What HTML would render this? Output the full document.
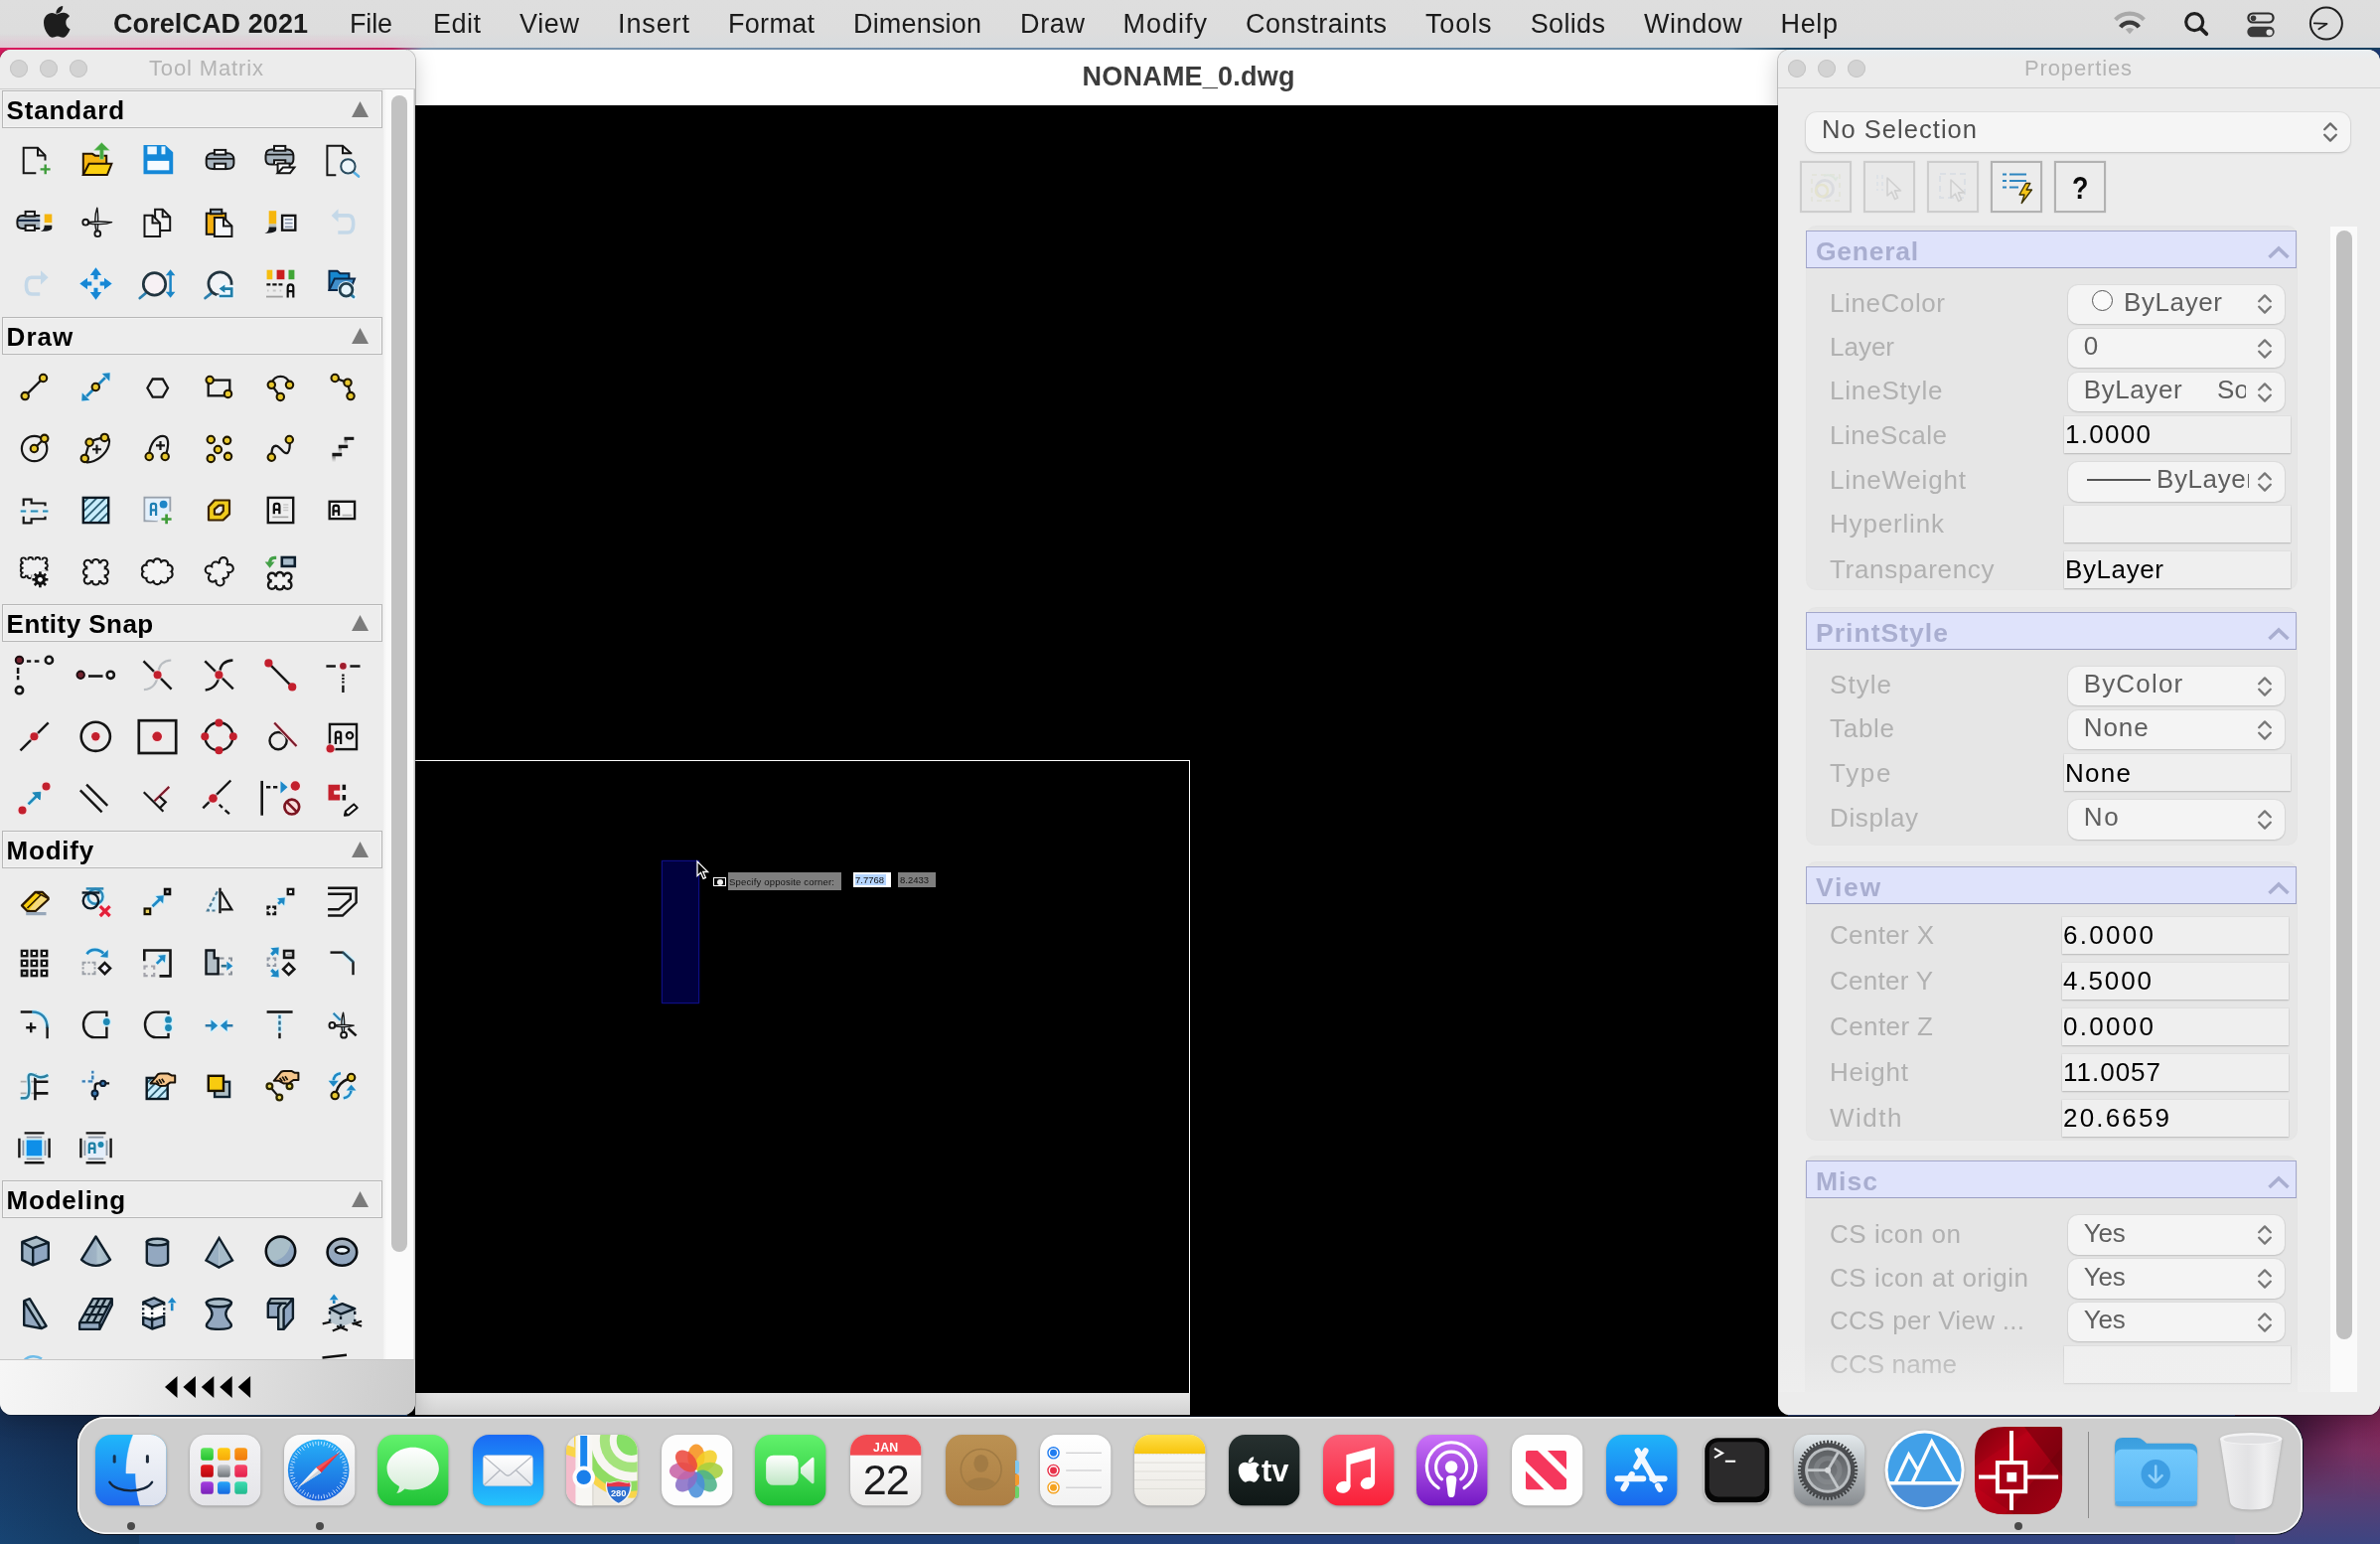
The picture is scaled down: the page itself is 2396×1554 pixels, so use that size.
<!DOCTYPE html>
<html lang="en"><head><meta charset="utf-8"><title>CorelCAD 2021</title>
<style>

html,body{margin:0;padding:0}
body{width:2396px;height:1554px;overflow:hidden;position:relative;font-family:"Liberation Sans",sans-serif;
 background:#1c3b78;}
.t{position:absolute;white-space:pre;line-height:1;}
.abs{position:absolute}
svg{position:absolute;overflow:visible}
#screen{position:absolute;left:0;top:0;width:2396px;height:1554px;overflow:hidden;will-change:transform}

</style></head>
<body>
<div id="screen">
<div class="abs" style="left:0;top:1380px;width:2396px;height:174px;background:linear-gradient(90deg,#15406c 0px,#173f70 300px,#213f7a 1200px,#2f4380 2000px,#3b4582 2396px);"></div>
<div class="abs" style="left:0;top:1400px;width:140px;height:154px;background:linear-gradient(180deg,#13233f 0px,#14284a 28px,#15335c 70px,#164270 154px);"></div>
<div class="abs" style="left:0;top:1400px;width:140px;height:154px;background:linear-gradient(90deg,rgba(30,80,130,.18),rgba(0,0,0,.18));"></div>
<div class="abs" style="left:2250px;top:1400px;width:146px;height:154px;background:linear-gradient(180deg,#5d1c45 0px,#6e2250 30px,#793062 60px,#643a6e 95px,#4f4179 125px,#3c4582 154px);"></div>
<div class="abs" style="left:2250px;top:1400px;width:146px;height:110px;background:linear-gradient(90deg,rgba(25,10,35,.55) 60px,rgba(25,10,35,0) 120px,rgba(150,40,90,.25) 146px);-webkit-mask-image:linear-gradient(180deg,#000 40px,transparent 110px)"></div>
<div class="abs" style="left:0;top:44px;width:30px;height:24px;background:#d81b60"></div>
<div class="abs" style="left:410px;top:50px;width:1390px;height:56px;background:#fff;"></div>
<span class="t" style="left:1089.5px;top:63.5px;font-size:27px;font-weight:700;color:#3c3c3c;letter-spacing:0.226px;">NONAME_0.dwg</span>
<div class="abs" style="left:410px;top:106px;width:1390px;height:1320px;background:#000;"></div>
<div class="abs" style="left:418px;top:764.800px;width:780.200px;height:1.400px;background:#fff;"></div>
<div class="abs" style="left:1196.800px;top:764.800px;width:1.400px;height:638px;background:#fff;"></div>
<div class="abs" style="left:418px;top:1402px;width:780px;height:22px;background:linear-gradient(180deg,#e5e5e5,#d2d2d2);"></div>
<div class="abs" style="left:666px;top:866px;width:36px;height:142px;background:#00003e;border:1px solid #0e0e84;box-shadow:0 0 2px #07075a;"></div>
<svg style="left:701px;top:866px" width="14" height="20" viewBox="0 0 14 20"><path d="M1 1v14.5l3.5-3.2 2.6 6 2.3-1-2.6-5.8H11.6z" fill="#000" stroke="#fff" stroke-width="1.3" stroke-linejoin="miter"/></svg>
<div class="abs" style="left:718px;top:883px;width:13px;height:9px;border:1px solid #fff;box-sizing:border-box"></div>
<div class="abs" style="left:721.5px;top:885px;width:6px;height:6px;border-radius:3px;background:#eee"></div>
<div class="abs" style="left:733px;top:878px;width:114px;height:18px;background:#7f7f7f;"></div>
<span class="t" style="left:734px;top:882.5px;font-size:9.5px;color:#151515;letter-spacing:0.177px;">Specify opposite corner:</span>
<div class="abs" style="left:859px;top:878px;width:38px;height:15px;background:#fff;"></div>
<div class="abs" style="left:861px;top:880px;width:31px;height:11px;background:#b5d5ff;"></div>
<span class="t" style="left:861px;top:881.0px;font-size:9.5px;color:#111;letter-spacing:-0.013px;">7.7768</span>
<div class="abs" style="left:904px;top:878px;width:38px;height:15px;background:#7f7f7f;"></div>
<span class="t" style="left:906px;top:881.0px;font-size:9.5px;color:#151515;letter-spacing:-0.013px;">8.2433</span>
<div class="abs" style="left:0;top:50px;width:418px;height:1374px;background:#ececec;border-radius:11px 11px 12px 12px;box-shadow:0 0 0 1px rgba(0,0,0,.2),0 3px 22px rgba(0,0,0,.2);overflow:hidden"><div class="abs" style="left:0;top:0;width:418px;height:38.5px;background:#ececec;border-bottom:1px solid #cdcdcd"></div><div class="abs" style="left:386px;top:39.5px;width:32px;height:1279px;background:linear-gradient(90deg,#f1f1f1 0,#fafafa 3px);box-shadow:inset -1.500px 0 0 #c2c2c2"></div><div class="abs" style="left:394px;top:46px;width:15.800px;height:1164.300px;background:#c2c2c2;border-radius:8px"></div><div class="abs" style="left:0;top:1318px;width:418px;height:56px;border-top:1.5px solid #c6c6c6;background:linear-gradient(100deg,#f6f6f6 0%,#ececec 30%,#d9d9d9 70%,#cbcbcb 100%)"></div></div>
<div style="position:absolute;left:9.8px;top:59.6px;width:18px;height:18px;border-radius:9px;background:#d3d3d3;box-shadow:inset 0 0 0 1px #c4c4c4;"></div>
<div style="position:absolute;left:39.6px;top:59.6px;width:18px;height:18px;border-radius:9px;background:#d3d3d3;box-shadow:inset 0 0 0 1px #c4c4c4;"></div>
<div style="position:absolute;left:70px;top:59.6px;width:18px;height:18px;border-radius:9px;background:#d3d3d3;box-shadow:inset 0 0 0 1px #c4c4c4;"></div>
<span class="t" style="left:150px;top:58.0px;font-size:22px;color:#b4b4b4;letter-spacing:0.864px;">Tool Matrix</span>
<div class="abs" style="left:0;top:89.5px;width:386px;height:1278px;overflow:hidden"><div style="position:absolute;left:2px;top:1.0px;width:383px;height:38px;box-sizing:border-box;border:1.5px solid #b7b7b7;background:#ededed;box-shadow:inset 0 0 0 1px #f3f3f3"></div><span class="t" style="left:6.6px;top:8.5px;font-size:26px;font-weight:700;color:#000;letter-spacing:0.844px;">Standard</span><svg style="left:353.500px;top:12.5px" width="17" height="16" viewBox="0 0 17 16"><path d="M8.500 0L17 16H0z" fill="#7b7b7b"/></svg><svg style="left:18.6px;top:55.8px" width="32" height="32" viewBox="0 0 32 32"><path d="M17.3 29.3H4.7V3.8H19L26.5 11.4V16.6" fill="none" stroke="#151515" stroke-width="2"/><path d="M19 3.8V11.4H26.5" fill="none" stroke="#151515" stroke-width="2"/><path d="M26.7 20.5V30.3M21.6 25.4H31.6" stroke="#3e9c3a" stroke-width="2.4"/></svg><svg style="left:80.7px;top:55.8px" width="32" height="32" viewBox="0 0 32 32"><path d="M2.8 31V9.8H12L14.800 11.700H26.2V19" fill="#f6b511" stroke="#231400" stroke-width="2" stroke-linejoin="miter"/><path d="M21.3 -1.600L29.3 6.200H23.300V15.300H19.500V6.200H13.600z" fill="#43a83e" stroke="#9fd89a" stroke-width=".6"/><path d="M8.600 19.800H31.400L26.900 31.100H2.800z" fill="#fbcf10" stroke="#231400" stroke-width="2" stroke-linejoin="miter"/></svg><svg style="left:142.7px;top:55.8px" width="32" height="32" viewBox="0 0 32 32"><path d="M1.500 0.900H23.400L31.200 8.300V30.200H1.500z" fill="#1488d8"/><rect x="5.400" y="2.400" width="9.400" height="7.900" fill="#eef8ff"/><rect x="19.500" y="2.400" width="3.900" height="7.900" fill="#e3f5ff"/><rect x="5.400" y="16.900" width="21.900" height="9.400" fill="#f6fbff"/></svg><svg style="left:204.7px;top:55.8px" width="32" height="32" viewBox="0 0 32 32"><g transform="translate(0 0)"><path d="M9 9.300C4.500 9.300 2.700 12.400 2.700 15.600V19.400C2.700 22.800 5 24.900 9 24.900H24C28 24.900 30.400 22.800 30.400 19.400V15.600C30.400 12.400 28.500 9.300 24 9.300z" fill="#a7b3bd" stroke="#151515" stroke-width="2"/><path d="M3 14.800H30" stroke="#151515" stroke-width="1.700"/><rect x="10.900" y="5.900" width="11.300" height="4.700" fill="#fbfdff" stroke="#151515" stroke-width="2"/><rect x="10.900" y="19.700" width="11.300" height="5.400" fill="#fbfdff" stroke="#151515" stroke-width="2"/></g></svg><svg style="left:266.6px;top:55.8px" width="32" height="32" viewBox="0 0 32 32"><path d="M6.500 5.600C2 5.600 0.500 8.700 0.500 11.600V15.400C0.500 18.600 2.600 20.600 6.500 20.600H22.500C26.400 20.600 28.400 18.600 28.400 15.400V11.600C28.400 8.700 26.900 5.600 22.500 5.600z" fill="#a7b3bd" stroke="#151515" stroke-width="2"/><path d="M1 10.600H28" stroke="#151515" stroke-width="1.700"/><rect x="9" y="1.900" width="11.300" height="4.800" fill="#fbfdff" stroke="#151515" stroke-width="2"/><path d="M9 20.300V16.300H20.300V19" fill="#fbfdff" stroke="#151515" stroke-width="2"/><path d="M12.600 29.200V19.500H24.600V23" fill="#fbfdff" stroke="#151515" stroke-width="2"/><path d="M17.900 23.500H29.400L25 29.200H12.600z" fill="#fbfdff" stroke="#151515" stroke-width="2"/></svg><svg style="left:328.6px;top:55.8px" width="32" height="32" viewBox="0 0 32 32"><path d="M9.300 31.300H0.400V1.700H16L24.300 9.300" fill="none" stroke="#151515" stroke-width="2"/><path d="M16 1.700V9.300H25.300" fill="none" stroke="#151515" stroke-width="2"/><circle cx="21.400" cy="22.400" r="8.800" fill="#eaf5fb" opacity=".8"/><path d="M26.700 28L32 32.600" stroke="#55aee2" stroke-width="2.600" stroke-linecap="round"/><circle cx="21.400" cy="22.400" r="7.200" fill="#edf6fb" stroke="#2a4b5e" stroke-width="2"/></svg><svg style="left:18.6px;top:117.8px" width="32" height="32" viewBox="0 0 32 32"><path d="M21.200 10.100H3.500C-0.500 10.100 -1.600 13 -1.600 15.500V18C-1.600 21 0 22.900 3.500 22.900H21.200" fill="#a7b3bd" stroke="#151515" stroke-width="2"/><path d="M-1.300 14.900H21.200" stroke="#0c1f3a" stroke-width="1.900"/><rect x="6.600" y="5.900" width="9.300" height="4.700" fill="#fbfdff" stroke="#151515" stroke-width="2"/><rect x="6.600" y="19.800" width="9.300" height="5.100" fill="#fbfdff" stroke="#151515" stroke-width="2"/><rect x="25.700" y="8.500" width="7.600" height="8.800" fill="#f5b50f"/><rect x="25.700" y="17.300" width="7.600" height="2.500" fill="#f2ecd0"/><path d="M33.300 19.800V22.500C33.300 24.600 30 25.900 21.600 25.900C24.500 25 25.700 23 25.700 19.800z" fill="#16181c"/></svg><svg style="left:80.7px;top:117.8px" width="32" height="32" viewBox="0 0 32 32"><circle cx="5.200" cy="16.700" r="2.900" fill="#f4f4f4" stroke="#151515" stroke-width="1.900"/><circle cx="17.300" cy="28.200" r="2.900" fill="#f4f4f4" stroke="#151515" stroke-width="1.900"/><path d="M16.800 2.200C14.200 9 14.500 20 15.800 25.500L17.200 25.600C17.800 18 17.800 8 16.800 2.200z" fill="#e9edef" stroke="#151515" stroke-width="1.400" stroke-linejoin="round"/><path d="M31.600 16.600C25 19.200 14 19 8 17.700L8 16.500C15 15.800 25 16 31.600 16.600z" fill="#e9edef" stroke="#151515" stroke-width="1.400" stroke-linejoin="round"/></svg><svg style="left:142.7px;top:117.8px" width="32" height="32" viewBox="0 0 32 32"><path d="M13.1 3.8H20.7L28.2 11.3V24.9H13.1z" fill="#f3f3f3" stroke="#151515" stroke-width="2" stroke-linejoin="miter"/><path d="M20.7 3.8V11.3H28.2" fill="none" stroke="#151515" stroke-width="2"/><path d="M2.5 9.8H10.500000000000002L18.1 17.4V31.1H2.5z" fill="#f3f3f3" stroke="#151515" stroke-width="2" stroke-linejoin="miter"/><path d="M10.500000000000002 9.8V17.4H18.1" fill="none" stroke="#151515" stroke-width="2"/></svg><svg style="left:204.7px;top:117.8px" width="32" height="32" viewBox="0 0 32 32"><rect x="2.800" y="7.700" width="19.400" height="21.100" fill="#f5b112" stroke="#151515" stroke-width="2"/><rect x="7" y="3.800" width="11.300" height="4.500" fill="#9bb0c4" stroke="#151515" stroke-width="2"/><path d="M10.9 12H20.0L28.4 20.4V31.1H10.9z" fill="#f5f7fc" stroke="#151515" stroke-width="2" stroke-linejoin="miter"/><path d="M20.0 12V20.4H28.4" fill="none" stroke="#151515" stroke-width="2"/></svg><svg style="left:266.6px;top:117.8px" width="32" height="32" viewBox="0 0 32 32"><rect x="3.700" y="5.200" width="7.500" height="13.300" fill="#f6b60d"/><rect x="3.700" y="18.500" width="7.500" height="3.100" fill="#b9c0bd"/><path d="M11.200 21.600V24C11.200 26.500 7 27.800 -0.600 27.800C3 26.600 3.700 24.500 3.700 21.600z" fill="#15181c"/><rect x="17.100" y="9.900" width="13.200" height="14.800" fill="#fafcff" stroke="#151515" stroke-width="2.400"/><path d="M19.800 13.800H27.600M19.800 17.600H27.600M19.800 21.400H27.600" stroke="#8b96aa" stroke-width="1.700"/></svg><svg style="left:328.6px;top:117.8px" width="32" height="32" viewBox="0 0 32 32"><path d="M10 9.900H22C26 9.900 26.700 14 26.700 18.400C26.700 23 25.500 27 21 27H11.300" fill="none" stroke="#c4d8e8" stroke-width="3.600"/><path d="M4.600 9.900L11.500 3.200V16.600z" fill="#c4d8e8"/></svg><svg style="left:18.6px;top:179.8px" width="32" height="32" viewBox="0 0 32 32"><path d="M23 10.300H12.500C8 10.300 7.400 14 7.400 18.500C7.400 23 8.500 27 13 27H21.200" fill="none" stroke="#c4d8e8" stroke-width="3.600"/><path d="M29.600 10.300L22 3.200V17.400z" fill="#c4d8e8"/></svg><svg style="left:80.7px;top:179.8px" width="32" height="32" viewBox="0 0 32 32"><g fill="#1787d4" stroke="#d9f0ff" stroke-width="1.200" paint-order="stroke" stroke-linejoin="round"><path d="M15.500 0.300L21.200 8H17.500V12.300H13.500V8H9.800z"/><path d="M15.500 32.700L21.200 25H17.500V20.700H13.500V25H9.800z"/><path d="M-0.700 16.500L7 10.800V14.500H11.300V18.500H7V22.200z"/><path d="M31.700 16.500L24 10.800V14.500H19.700V18.500H24V22.200z"/></g></svg><svg style="left:142.7px;top:179.8px" width="32" height="32" viewBox="0 0 32 32"><path d="M3.800 26L-2.200 31" stroke="#2b7fae" stroke-width="2.800" stroke-linecap="round"/><circle cx="12.500" cy="16.900" r="11.200" fill="#f7f1f4" stroke="#21343f" stroke-width="2.700"/><path d="M28.600 6V27" stroke="#1b86c7" stroke-width="2.500"/><path d="M28.600 2.200L33.400 8.300H23.800zM28.600 30.800L33.400 24.700H23.800z" fill="#1b86c7"/></svg><svg style="left:204.7px;top:179.8px" width="32" height="32" viewBox="0 0 32 32"><path d="M8 25.800L1.600 31" stroke="#2b7fae" stroke-width="2.800" stroke-linecap="round"/><circle cx="16.500" cy="16.500" r="11.600" fill="#f1f3f6" stroke="#21343f" stroke-width="2.700"/><path d="M16 21.600L21.200 17.600V20.300H28.200V29H15.700V27.700" fill="#eef8ff" stroke="#eef8ff" stroke-width="5" stroke-linejoin="round"/><path d="M21 21.600H28.200V29H15.700" fill="none" stroke="#1f7ea8" stroke-width="2.700"/><path d="M15.600 21.600L21.400 17.500V25.700z" fill="#1f7ea8"/></svg><svg style="left:266.6px;top:179.8px" width="32" height="32" viewBox="0 0 32 32"><rect x="1.600" y="2.700" width="5.700" height="9.500" fill="#f6bd0f"/><rect x="11.600" y="2.700" width="7.800" height="9.500" fill="#cb1e1e"/><rect x="23.500" y="2.700" width="5.900" height="9.500" fill="#40a636"/><path d="M1.400 17.400H5.300M7.300 17.400H11.600M13.500 17.400H17.400" stroke="#111" stroke-width="2.200"/><path d="M2 23.500H3.600M7.700 23.500H10.700M14.600 23.500H16.200" stroke="#c6c6c6" stroke-width="1.800"/><path d="M1 29.600H17.800" stroke="#a2a2a2" stroke-width="1.800"/><path d="M22.700 30.400V20.300C22.700 18.300 23.700 17.300 25.500 17.300C27.300 17.300 28.300 18.300 28.300 20.300V30.400M22.700 24.200H28.300" fill="none" stroke="#0d0d0d" stroke-width="2.200"/></svg><svg style="left:328.6px;top:179.8px" width="32" height="32" viewBox="0 0 32 32"><path d="M2.500 22.900V3.800H10.600L13.400 6.200H22.400V11" fill="#1787cf" stroke="#0b2747" stroke-width="2" stroke-linejoin="miter"/><path d="M7.800 11.600H28L23.500 22.900H2.500z" fill="#418fca" stroke="#0b2747" stroke-width="2" stroke-linejoin="miter"/><circle cx="19.500" cy="22.700" r="8.600" fill="#e9f6fd"/><path d="M24 27.400L27.200 30" stroke="#e9f6fd" stroke-width="5.500" stroke-linecap="round"/><path d="M24 27.400L27 29.900" stroke="#2b7fa8" stroke-width="2.800" stroke-linecap="round"/><circle cx="19.500" cy="22.700" r="6.400" fill="#e6f4fb" stroke="#22404f" stroke-width="2.700"/></svg><div style="position:absolute;left:2px;top:229.0px;width:383px;height:38px;box-sizing:border-box;border:1.5px solid #b7b7b7;background:#ededed;box-shadow:inset 0 0 0 1px #f3f3f3"></div><span class="t" style="left:6.6px;top:236.5px;font-size:26px;font-weight:700;color:#000;letter-spacing:1.007px;">Draw</span><svg style="left:353.500px;top:240.5px" width="17" height="16" viewBox="0 0 17 16"><path d="M8.500 0L17 16H0z" fill="#7b7b7b"/></svg><svg style="left:18.6px;top:283.8px" width="32" height="32" viewBox="0 0 32 32"><path d="M6.200 25.600L24.500 7.500" stroke="#151515" stroke-width="2.400"/><circle cx="24.5" cy="7.5" r="3.7" fill="#e9c92f" stroke="#1e1600" stroke-width="2.1"/><circle cx="6.2" cy="25.6" r="3.7" fill="#e9c92f" stroke="#1e1600" stroke-width="2.1"/></svg><svg style="left:80.7px;top:283.8px" width="32" height="32" viewBox="0 0 32 32"><g stroke="#cdeeff" stroke-width="1.200" paint-order="stroke" stroke-linejoin="round"><path d="M26.500 5.500L4.500 27.500" stroke="#1e86c0" stroke-width="2.700" paint-order="normal"/><path d="M29.700 2.200L21.800 3.100L29.200 10.500z" fill="#1e86c0"/><path d="M1.300 30.400L9.200 29.800L1.800 22.400z" fill="#1e86c0"/></g><circle cx="15.3" cy="16.5" r="3.7" fill="#e9c92f" stroke="#1e1600" stroke-width="2.1"/></svg><svg style="left:142.7px;top:283.8px" width="32" height="32" viewBox="0 0 32 32"><path d="M5.400 17.500L10.700 8.500H20.800L26 17.500L20.800 26.600H10.700z" fill="none" stroke="#151515" stroke-width="2.300" stroke-linejoin="miter"/></svg><svg style="left:204.7px;top:283.8px" width="32" height="32" viewBox="0 0 32 32"><rect x="4.700" y="9.600" width="21.600" height="15.700" fill="none" stroke="#151515" stroke-width="2.300"/><circle cx="6.2" cy="9.5" r="3.7" fill="#e9c92f" stroke="#1e1600" stroke-width="2.1"/><circle cx="24.5" cy="23.4" r="3.7" fill="#e9c92f" stroke="#1e1600" stroke-width="2.1"/></svg><svg style="left:266.6px;top:283.8px" width="32" height="32" viewBox="0 0 32 32"><path d="M6.300 14.300L15.300 26.400" stroke="#151515" stroke-width="2.300"/><path d="M6.600 12.500A9.200 9.200 0 0 1 24.300 12.500" fill="none" stroke="#151515" stroke-width="2.300"/><circle cx="6.3" cy="14.3" r="3.7" fill="#e9c92f" stroke="#1e1600" stroke-width="2.1"/><circle cx="24.5" cy="14.3" r="3.7" fill="#e9c92f" stroke="#1e1600" stroke-width="2.1"/><circle cx="15.3" cy="26.4" r="3.7" fill="#e9c92f" stroke="#1e1600" stroke-width="2.1"/></svg><svg style="left:328.6px;top:283.8px" width="32" height="32" viewBox="0 0 32 32"><path d="M8.200 7.500L21 12.200L24 25.600" fill="none" stroke="#151515" stroke-width="2.300"/><circle cx="8.2" cy="7.5" r="3.7" fill="#e9c92f" stroke="#1e1600" stroke-width="2.1"/><circle cx="21" cy="12.2" r="3.7" fill="#e9c92f" stroke="#1e1600" stroke-width="2.1"/><circle cx="24" cy="25.6" r="3.7" fill="#e9c92f" stroke="#1e1600" stroke-width="2.1"/></svg><svg style="left:18.6px;top:345.8px" width="32" height="32" viewBox="0 0 32 32"><circle cx="15.600" cy="16.500" r="12.700" fill="none" stroke="#151515" stroke-width="2.200"/><path d="M15.400 16.500L25.700 6.300" stroke="#151515" stroke-width="2.200"/><circle cx="15.4" cy="16.5" r="3.7" fill="#e9c92f" stroke="#1e1600" stroke-width="2.1"/><circle cx="25.75" cy="6.3" r="3.7" fill="#e9c92f" stroke="#1e1600" stroke-width="2.1"/></svg><svg style="left:80.7px;top:345.8px" width="32" height="32" viewBox="0 0 32 32"><path d="M4.300 26.400L9.100 10.300Q15.500 6.500 24.300 5.400C29 4.500 30 8 28.500 13C26 22 16 30.500 6.500 30.300C4.500 30.200 4 28.500 4.300 26.400z" fill="none" stroke="#151515" stroke-width="2.200"/><path d="M16.500 12.800V21.800M12 17.300H21" stroke="#151515" stroke-width="2.100"/><circle cx="9.1" cy="10.25" r="3.7" fill="#e9c92f" stroke="#1e1600" stroke-width="2.1"/><circle cx="24.3" cy="5.4" r="3.7" fill="#e9c92f" stroke="#1e1600" stroke-width="2.1"/><circle cx="4.3" cy="26.4" r="3.7" fill="#e9c92f" stroke="#1e1600" stroke-width="2.1"/></svg><svg style="left:142.7px;top:345.8px" width="32" height="32" viewBox="0 0 32 32"><path d="M7.200 22C8 12 14 3.800 21 3.800C27 3.800 27.200 12 24.300 22" fill="none" stroke="#151515" stroke-width="2.200"/><path d="M18.500 8.900V17.900M14 13.400H23" stroke="#151515" stroke-width="2.200"/><circle cx="7.2" cy="24.5" r="3.7" fill="#e9c92f" stroke="#1e1600" stroke-width="2.1"/><circle cx="23.2" cy="24.5" r="3.7" fill="#e9c92f" stroke="#1e1600" stroke-width="2.1"/></svg><svg style="left:204.7px;top:345.8px" width="32" height="32" viewBox="0 0 32 32"><circle cx="7.3" cy="7.5" r="3.7" fill="#e9c92f" stroke="#1e1600" stroke-width="2.1"/><circle cx="23.6" cy="8.3" r="3.7" fill="#e9c92f" stroke="#1e1600" stroke-width="2.1"/><circle cx="14.4" cy="17.5" r="3.7" fill="#e9c92f" stroke="#1e1600" stroke-width="2.1"/><circle cx="7.3" cy="26.4" r="3.7" fill="#e9c92f" stroke="#1e1600" stroke-width="2.1"/><circle cx="24.5" cy="24.3" r="3.7" fill="#e9c92f" stroke="#1e1600" stroke-width="2.1"/></svg><svg style="left:266.6px;top:345.8px" width="32" height="32" viewBox="0 0 32 32"><path d="M6.500 22.500C6.500 15 8.500 13.500 11.500 13.800C15 14.200 18 21.500 21.300 21.200C24.200 21 24.800 15 24.800 11" fill="none" stroke="#151515" stroke-width="2.300"/><circle cx="24.3" cy="7.5" r="3.7" fill="#e9c92f" stroke="#1e1600" stroke-width="2.1"/><circle cx="6.3" cy="25.25" r="3.7" fill="#e9c92f" stroke="#1e1600" stroke-width="2.1"/></svg><svg style="left:328.6px;top:345.8px" width="32" height="32" viewBox="0 0 32 32"><defs><linearGradient id="skg" x1="0" y1="0" x2="0" y2="1"><stop offset="0" stop-color="#777"/><stop offset="1" stop-color="#bbb" stop-opacity=".2"/></linearGradient></defs><rect x="17.500" y="7.900" width="3.200" height="4.900" fill="url(#skg)"/><rect x="11.700" y="16.100" width="3.200" height="4.700" fill="url(#skg)"/><rect x="5.400" y="24.300" width="3.400" height="5.500" fill="url(#skg)"/><rect x="17.500" y="4.800" width="9.800" height="3.100" fill="#171717"/><rect x="11.700" y="12.750" width="9.500" height="3.350" fill="#171717"/><rect x="5.400" y="20.800" width="9.800" height="3.500" fill="#171717"/></svg><svg style="left:18.6px;top:407.8px" width="32" height="32" viewBox="0 0 32 32"><path d="M4.700 12.200V5.600H12.600V9.500H26.500V12.200M4.700 22.750V29.400H12.600V25.250H26.500V22.750" fill="none" stroke="#151515" stroke-width="2.200"/><path d="M1.700 17.500H7.200M11.800 17.500H19.300M24 17.500H29.400" stroke="#d4f0fb" stroke-width="4"/><path d="M1.700 17.500H7.200M11.800 17.500H19.300M24 17.500H29.400" stroke="#2a8ab4" stroke-width="2.200"/></svg><svg style="left:80.7px;top:407.8px" width="32" height="32" viewBox="0 0 32 32"><defs><clipPath id="hcl"><rect x="2.800" y="3.900" width="25.400" height="25.200"/></clipPath></defs><rect x="2.800" y="3.900" width="25.400" height="25.200" fill="#c8edfc"/><g clip-path="url(#hcl)" stroke="#2c5e73" stroke-width="1.800"><path d="M-4 16L16 -4M-4 24.700L24.700 -4M-4 33.400L33.400 -4M4.700 33.400L36 2.100M13.400 33.400L36 10.800M22.100 33.400L36 19.500"/></g><rect x="2.800" y="3.900" width="25.400" height="25.200" fill="none" stroke="#0b1822" stroke-width="2.400"/></svg><svg style="left:142.7px;top:407.8px" width="32" height="32" viewBox="0 0 32 32"><path d="M15.600 27.200H2.500V3.800H28.250V17.700" fill="#e4f0fb" stroke="#98a1ac" stroke-width="2"/><path d="M15.600 27.200V17.700H27.250V4.800H3.500V26.200z" fill="#e4f0fb"/><path d="M8.9 22.1V12.100000000000001Q8.9 9.9 11.100000000000001 9.9H11.899999999999999Q14.1 9.9 14.1 12.100000000000001V22.1M8.9 16.3H14.1" fill="none" stroke="#1d7fb4" stroke-width="2.2"/><circle cx="21.600" cy="10.600" r="3.900" fill="#1e86c8"/><path d="M24.600 20.600V30.300M19.500 25.500H29.600" stroke="#3f9c3a" stroke-width="2.700"/></svg><svg style="left:204.7px;top:407.8px" width="32" height="32" viewBox="0 0 32 32"><path d="M11 6.500H26V20.400L19.600 26.500H5V13z" fill="#f0cb1c" stroke="#3a2200" stroke-width="2.200" stroke-linejoin="round"/><path d="M15.400 11.600H19.800V17.300L16.800 20.600H10.900V15.600z" fill="#ebebf0" stroke="#3a2200" stroke-width="2.200" stroke-linejoin="round"/></svg><svg style="left:266.6px;top:407.8px" width="32" height="32" viewBox="0 0 32 32"><rect x="2.800" y="3.900" width="25.400" height="25.200" fill="#efefef" stroke="#151515" stroke-width="2.400"/><path d="M8.85 20.25V12.150000000000002Q8.85 9.950000000000001 11.05 9.950000000000001H12.149999999999999Q14.35 9.950000000000001 14.35 12.150000000000002V20.25M8.85 15.8H14.35" fill="none" stroke="#0d0d0d" stroke-width="2.3"/><path d="M18.200 11H23.300M18.200 13.800H23.300M18.200 16.500H23.300" stroke="#c9c9c9" stroke-width="1.400"/><path d="M7.300 23.400H23.300" stroke="#a6a6a6" stroke-width="1.600"/></svg><svg style="left:328.6px;top:407.8px" width="32" height="32" viewBox="0 0 32 32"><rect x="2.700" y="7.800" width="25.350" height="17.300" fill="#f2f2f2" stroke="#151515" stroke-width="2.400"/><path d="M6.550000000000001 22.1V13.95Q6.550000000000001 11.75 8.75 11.75H9.849999999999998Q12.049999999999999 11.75 12.049999999999999 13.95V22.1M6.550000000000001 17.3H12.049999999999999" fill="none" stroke="#0d0d0d" stroke-width="2.3"/><path d="M15.600 21.600H25.300" stroke="#b5b5b5" stroke-width="1.800"/></svg><svg style="left:18.6px;top:469.8px" width="32" height="32" viewBox="0 0 32 32"><defs><clipPath id="ccs"><path d="M-2 -2H34V15.500H22L11.500 26H-2z"/></clipPath></defs><g clip-path="url(#ccs)"><g fill="#151515"><circle cx="4.6" cy="4.8" r="3.4"/><circle cx="11.7" cy="4.4" r="3.4"/><circle cx="18.8" cy="4.4" r="3.4"/><circle cx="25.9" cy="4.8" r="3.4"/><circle cx="4.3" cy="10.2" r="3.4"/><circle cx="4.3" cy="15" r="3.4"/><circle cx="4.6" cy="19.8" r="3.4"/><circle cx="26.3" cy="10.3" r="3.4"/><circle cx="26.1" cy="15.5" r="3.4"/><circle cx="11" cy="20.5" r="3.4"/><circle cx="17" cy="20.5" r="3.4"/></g><path d="M4.600 4.800H25.900V19.800H4.600z" fill="#efeff0"/><g fill="#f7f7f7"><circle cx="4.6" cy="4.8" r="1.5"/><circle cx="11.7" cy="4.4" r="1.5"/><circle cx="18.8" cy="4.4" r="1.5"/><circle cx="25.9" cy="4.8" r="1.5"/><circle cx="4.3" cy="10.2" r="1.5"/><circle cx="4.3" cy="15" r="1.5"/><circle cx="4.6" cy="19.8" r="1.5"/><circle cx="26.3" cy="10.3" r="1.5"/><circle cx="26.1" cy="15.5" r="1.5"/><circle cx="11" cy="20.5" r="1.5"/><circle cx="17" cy="20.5" r="1.5"/></g></g><circle cx="21.400" cy="24.300" r="9.300" fill="#f2f2f2" opacity=".9"/><rect x="20.100" y="16.300" width="2.600" height="16" transform="rotate(0 21.400 24.300)" fill="#111"/><rect x="20.100" y="16.300" width="2.600" height="16" transform="rotate(45 21.400 24.300)" fill="#111"/><rect x="20.100" y="16.300" width="2.600" height="16" transform="rotate(90 21.400 24.300)" fill="#111"/><rect x="20.100" y="16.300" width="2.600" height="16" transform="rotate(135 21.400 24.300)" fill="#111"/><circle cx="21.400" cy="24.300" r="5.700" fill="#111"/><circle cx="21.400" cy="24.300" r="2.400" fill="#fff"/></svg><svg style="left:80.7px;top:469.8px" width="32" height="32" viewBox="0 0 32 32"><g fill="#151515"><circle cx="7.3" cy="8.3" r="4.6"/><circle cx="15.5" cy="7.5" r="4.6"/><circle cx="23.7" cy="8.3" r="4.6"/><circle cx="6.5" cy="16.7" r="4.6"/><circle cx="24.5" cy="16.7" r="4.6"/><circle cx="7.3" cy="25.1" r="4.6"/><circle cx="15.5" cy="25.9" r="4.6"/><circle cx="23.7" cy="25.1" r="4.6"/></g><path d="M7.300 8.300H23.700V25.100H7.300z" fill="#eeeeef"/><g fill="#f3f3f3"><circle cx="7.3" cy="8.3" r="2.5"/><circle cx="15.5" cy="7.5" r="2.5"/><circle cx="23.7" cy="8.3" r="2.5"/><circle cx="6.5" cy="16.7" r="2.5"/><circle cx="24.5" cy="16.7" r="2.5"/><circle cx="7.3" cy="25.1" r="2.5"/><circle cx="15.5" cy="25.9" r="2.5"/><circle cx="23.7" cy="25.1" r="2.5"/></g></svg><svg style="left:142.7px;top:469.8px" width="32" height="32" viewBox="0 0 32 32"><g fill="#151515"><circle cx="15.3" cy="7.3" r="5"/><circle cx="22.35" cy="9.02" r="5"/><circle cx="26.71" cy="13.52" r="5"/><circle cx="26.71" cy="19.08" r="5"/><circle cx="22.35" cy="23.58" r="5"/><circle cx="15.3" cy="25.3" r="5"/><circle cx="8.25" cy="23.58" r="5"/><circle cx="3.89" cy="19.08" r="5"/><circle cx="3.89" cy="13.52" r="5"/><circle cx="8.25" cy="9.02" r="5"/></g><path d="M3.300 16.300a12 9 0 1 0 24 0a12 9 0 1 0 -24 0z" fill="#f3f3f3"/><g fill="#f3f3f3"><circle cx="15.3" cy="7.3" r="2.8"/><circle cx="22.35" cy="9.02" r="2.8"/><circle cx="26.71" cy="13.52" r="2.8"/><circle cx="26.71" cy="19.08" r="2.8"/><circle cx="22.35" cy="23.58" r="2.8"/><circle cx="15.3" cy="25.3" r="2.8"/><circle cx="8.25" cy="23.58" r="2.8"/><circle cx="3.89" cy="19.08" r="2.8"/><circle cx="3.89" cy="13.52" r="2.8"/><circle cx="8.25" cy="9.02" r="2.8"/></g></svg><svg style="left:204.7px;top:469.8px" width="32" height="32" viewBox="0 0 32 32"><g fill="#151515"><circle cx="20" cy="6.2" r="5.1"/><circle cx="25.7" cy="13.2" r="5.1"/><circle cx="5.8" cy="14.5" r="5.1"/><circle cx="12.2" cy="10.5" r="5.1"/><circle cx="16.5" cy="26.4" r="5.1"/><circle cx="9" cy="22.6" r="5.1"/><circle cx="21" cy="19" r="5.1"/></g><path d="M20 6.200L25.700 13.200L21 19L16.500 26.400L9 22.600L5.800 14.500L12.200 10.500z" fill="#f1f1f1"/><g fill="#f1f1f1"><circle cx="20" cy="6.2" r="3"/><circle cx="25.7" cy="13.2" r="3"/><circle cx="5.8" cy="14.5" r="3"/><circle cx="12.2" cy="10.5" r="3"/><circle cx="16.5" cy="26.4" r="3"/><circle cx="9" cy="22.6" r="3"/><circle cx="21" cy="19" r="3"/></g></svg><svg style="left:266.6px;top:469.8px" width="32" height="32" viewBox="0 0 32 32"><path d="M11.200 2.300H9.500C6 2.300 4.600 4.500 4.600 8" fill="none" stroke="#43a047" stroke-width="3.200"/><path d="M4.600 12.800L-0.300 6.600H9.500z" fill="#43a047"/><rect x="16.800" y="2" width="13" height="8.900" fill="#a8bccb" stroke="#0b1d2b" stroke-width="2.600"/><g fill="#151515"><circle cx="6.8" cy="21.6" r="5"/><circle cx="14.7" cy="20.8" r="5"/><circle cx="22.6" cy="21.6" r="5"/><circle cx="6.8" cy="29.9" r="5"/><circle cx="14.7" cy="30.6" r="5"/><circle cx="22.6" cy="29.9" r="5"/></g><path d="M6.800 21.600H22.600V29.900H6.800z" fill="#f1f1f1"/><g fill="#f1f1f1"><circle cx="6.8" cy="21.6" r="2.6"/><circle cx="14.7" cy="20.8" r="2.6"/><circle cx="22.6" cy="21.6" r="2.6"/><circle cx="6.8" cy="29.9" r="2.6"/><circle cx="14.7" cy="30.6" r="2.6"/><circle cx="22.6" cy="29.9" r="2.6"/></g></svg><div style="position:absolute;left:2px;top:518.0px;width:383px;height:38px;box-sizing:border-box;border:1.5px solid #b7b7b7;background:#ededed;box-shadow:inset 0 0 0 1px #f3f3f3"></div><span class="t" style="left:6.6px;top:525.5px;font-size:26px;font-weight:700;color:#000;letter-spacing:0.458px;">Entity Snap</span><svg style="left:353.500px;top:529.5px" width="17" height="16" viewBox="0 0 17 16"><path d="M8.500 0L17 16H0z" fill="#7b7b7b"/></svg><svg style="left:18.6px;top:573.8px" width="32" height="32" viewBox="0 0 32 32"><path d="M7.900 2.400H12.200M15.750 2.400H20.400M-0.900 9.100V14.900M-0.900 16.900V21.200" stroke="#151515" stroke-width="2.500"/><circle cx="0.5" cy="1.4" r="3.700" fill="#74242f" stroke="#1c0c10" stroke-width="2"/><circle cx="30.4" cy="1.4" r="3.600" fill="#f6f6f6" stroke="#151515" stroke-width="2.600"/><circle cx="0.5" cy="31.7" r="3.600" fill="#f6f6f6" stroke="#151515" stroke-width="2.600"/></svg><svg style="left:80.7px;top:573.8px" width="32" height="32" viewBox="0 0 32 32"><path d="M8 17.500H22.500" stroke="#151515" stroke-width="2.600"/><circle cx="0.2" cy="16.3" r="3.700" fill="#74242f" stroke="#1c0c10" stroke-width="2"/><circle cx="30.3" cy="16.3" r="3.600" fill="#f6f6f6" stroke="#151515" stroke-width="2.600"/></svg><svg style="left:142.7px;top:573.8px" width="32" height="32" viewBox="0 0 32 32"><path d="M29.250 1.500C20 2 17 7 16.200 14C15.500 24 11 30.500 1.900 31.100" fill="none" stroke="#b9bdc1" stroke-width="2.200"/><path d="M1.500 2.400L29.600 30.600" stroke="#151515" stroke-width="2.400"/><circle cx="15.6" cy="16.3" r="5.3" fill="#fbe3e6" opacity=".7"/><circle cx="15.6" cy="16.3" r="4.0" fill="#c31f2d"/></svg><svg style="left:204.7px;top:573.8px" width="32" height="32" viewBox="0 0 32 32"><path d="M29.400 1.500C20.500 2 17 6.500 16.300 13C15.500 24 11 30.500 1.700 31.500" fill="none" stroke="#151515" stroke-width="2.400"/><path d="M1.300 2.400L29.800 30.300" stroke="#151515" stroke-width="2.400"/><circle cx="15.4" cy="16.3" r="5.3" fill="#fbe3e6" opacity=".7"/><circle cx="15.4" cy="16.3" r="4.0" fill="#c31f2d"/></svg><svg style="left:266.6px;top:573.8px" width="32" height="32" viewBox="0 0 32 32"><path d="M3.400 4.400L27.200 28.400" stroke="#151515" stroke-width="2.400"/><circle cx="3.4" cy="4.4" r="4.1" fill="#c31f2d"/><circle cx="27.2" cy="28.4" r="4.1" fill="#c31f2d"/></svg><svg style="left:328.6px;top:573.8px" width="32" height="32" viewBox="0 0 32 32"><path d="M-0.600 7.500H8.900M23.400 7.500H33.500" stroke="#151515" stroke-width="2.400"/><path d="M16.400 15.500V17.700M16.400 19V21M16.400 22.500V24.500M16.400 26.700V34" stroke="#151515" stroke-width="2.400"/><circle cx="16.4" cy="7.4" r="4.6" fill="#fbe3e6" opacity=".7"/><circle cx="16.4" cy="7.4" r="3.3" fill="#a01c2c"/></svg><svg style="left:18.6px;top:635.8px" width="32" height="32" viewBox="0 0 32 32"><path d="M1.500 30.300L29.700 2.400" stroke="#151515" stroke-width="2.400"/><circle cx="15.4" cy="16.3" r="5.3" fill="#fbe3e6" opacity=".7"/><circle cx="15.4" cy="16.3" r="4.0" fill="#c31f2d"/></svg><svg style="left:80.7px;top:635.8px" width="32" height="32" viewBox="0 0 32 32"><circle cx="15.300" cy="16.300" r="14.600" fill="none" stroke="#151515" stroke-width="2.600"/><circle cx="15.3" cy="16.3" r="5.5" fill="#fbe3e6" opacity=".7"/><circle cx="15.3" cy="16.3" r="4.2" fill="#c31f2d"/></svg><svg style="left:142.7px;top:635.8px" width="32" height="32" viewBox="0 0 32 32"><rect x="-3.200" y="0.200" width="37.400" height="32.800" fill="none" stroke="#151515" stroke-width="2.700"/><circle cx="15.2" cy="16.3" r="6.1" fill="#fbe3e6" opacity=".7"/><circle cx="15.2" cy="16.3" r="4.8" fill="#c31f2d"/></svg><svg style="left:204.7px;top:635.8px" width="32" height="32" viewBox="0 0 32 32"><circle cx="15.400" cy="16.300" r="14.100" fill="none" stroke="#151515" stroke-width="2.400"/><circle cx="1.3" cy="16.3" r="4.0" fill="#c31f2d"/><circle cx="29.8" cy="16.3" r="4.0" fill="#c31f2d"/><circle cx="15.4" cy="2.4" r="4.0" fill="#c31f2d"/><circle cx="15.4" cy="30.3" r="4.0" fill="#c31f2d"/></svg><svg style="left:266.6px;top:635.8px" width="32" height="32" viewBox="0 0 32 32"><circle cx="13.100" cy="20.600" r="8.600" fill="none" stroke="#151515" stroke-width="2.400"/><path d="M9.200 2.400L31.500 25.900" stroke="#fbdfe2" stroke-width="4"/><path d="M9.200 2.400L31.500 25.900" stroke="#7a1a2a" stroke-width="2.200"/></svg><svg style="left:328.6px;top:635.8px" width="32" height="32" viewBox="0 0 32 32"><rect x="2.950" y="3.900" width="27.050" height="25.200" fill="none" stroke="#151515" stroke-width="2.400"/><path d="M8.900 23.900V13.800Q8.900 11.700 11 11.700H12Q14.100 11.700 14.100 13.800V23.900M8.900 17.700H14.100" fill="none" stroke="#0d0d0d" stroke-width="2.300"/><circle cx="23" cy="15.300" r="3.200" fill="none" stroke="#0d0d0d" stroke-width="2.200"/><circle cx="3.5" cy="28.4" r="5.3" fill="#fbe3e6" opacity=".7"/><circle cx="3.5" cy="28.4" r="4.0" fill="#c31f2d"/></svg><svg style="left:18.6px;top:697.8px" width="32" height="32" viewBox="0 0 32 32"><path d="M9.500 22.400L19 13" stroke="#cdeefa" stroke-width="4.500"/><path d="M9.500 22.400L19 13" stroke="#1e88b8" stroke-width="2.700"/><path d="M21.800 10.250L13.800 11L21.100 18z" fill="#1e88b8" stroke="#1e88b8" stroke-width="1" stroke-linejoin="round"/><circle cx="27.5" cy="4.4" r="5.3" fill="#fbe3e6" opacity=".7"/><circle cx="27.5" cy="4.4" r="4.0" fill="#c31f2d"/><circle cx="3.5" cy="28.4" r="5.3" fill="#fbe3e6" opacity=".7"/><circle cx="3.5" cy="28.4" r="4.0" fill="#c31f2d"/></svg><svg style="left:80.7px;top:697.8px" width="32" height="32" viewBox="0 0 32 32"><path d="M-0.200 8.300L21.600 30.300M6.100 2.700L27.200 23.900" stroke="#151515" stroke-width="2.400"/></svg><svg style="left:142.7px;top:697.8px" width="32" height="32" viewBox="0 0 32 32"><path d="M12.500 19.200L27.300 4.900" stroke="#fbdfe2" stroke-width="4"/><path d="M12.500 19.200L27.300 4.900" stroke="#7a1a2a" stroke-width="2.200"/><path d="M1.750 10.250L21.400 29.800M17.500 14.500L23.800 20.400L18.300 25.900" fill="none" stroke="#151515" stroke-width="2.200"/></svg><svg style="left:204.7px;top:697.8px" width="32" height="32" viewBox="0 0 32 32"><path d="M-0.700 26.300L27.300 -1.500M15.750 22.750L18.900 25.900M21.600 28.400L25.900 32.100" stroke="#151515" stroke-width="2.400"/><circle cx="9.5" cy="16.5" r="5.6" fill="#fbe3e6" opacity=".7"/><circle cx="9.5" cy="16.5" r="4.3" fill="#c31f2d"/></svg><svg style="left:266.6px;top:697.8px" width="32" height="32" viewBox="0 0 32 32"><path d="M-3.300 -1.100V33.700" stroke="#151515" stroke-width="2.600"/><path d="M1 5.200H5.300M8 5.200H12.300" stroke="#151515" stroke-width="2.400"/><path d="M15.500 -0.700V11.400L22.500 5.200z" fill="#1e88c8" stroke="#d5f0ff" stroke-width="1" paint-order="stroke"/><circle cx="30.3" cy="4" r="6.0" fill="#fbe3e6" opacity=".7"/><circle cx="30.3" cy="4" r="4.7" fill="#c31f2d"/><circle cx="26.800" cy="25.100" r="9.200" fill="#fde8ea" opacity=".8"/><circle cx="26.800" cy="25.100" r="7.400" fill="#f8dcdc" stroke="#7a1420" stroke-width="2.700"/><path d="M21.500 19.900L32 30.400" stroke="#7a1420" stroke-width="2.700"/></svg><svg style="left:328.6px;top:697.8px" width="32" height="32" viewBox="0 0 32 32"><path d="M1.500 2.700H13.200V8.800H7.400V12.400H13.200V18.500H1.500z" fill="#c4202c"/><rect x="15.600" y="2.700" width="3.500" height="5.600" fill="#131313"/><rect x="15.600" y="13" width="3.500" height="5.500" fill="#131313"/><rect x="15.600" y="8.300" width="3.500" height="4.700" fill="#f5f5f5"/><rect x="7.400" y="8.800" width="8.200" height="3.600" fill="#fbeaea"/><path d="M27.200 22.400L30.700 25.900L22 33.300L17.900 33.700L18.800 29.600z" fill="#fafafa" stroke="#111" stroke-width="2" stroke-linejoin="round"/><path d="M18.800 29.600L22 33.300L17.900 33.700z" fill="#111"/></svg><div style="position:absolute;left:2px;top:746.0px;width:383px;height:38px;box-sizing:border-box;border:1.5px solid #b7b7b7;background:#ededed;box-shadow:inset 0 0 0 1px #f3f3f3"></div><span class="t" style="left:6.6px;top:753.5px;font-size:26px;font-weight:700;color:#000;letter-spacing:0.766px;">Modify</span><svg style="left:353.500px;top:757.5px" width="17" height="16" viewBox="0 0 17 16"><path d="M8.500 0L17 16H0z" fill="#7b7b7b"/></svg><svg style="left:18.6px;top:801.8px" width="32" height="32" viewBox="0 0 32 32"><rect x="7.200" y="27" width="20.300" height="3.200" fill="#97a7b9"/><path d="M3 20.400L16.600 6.900H23.600L29.600 12.700V14.200L16.800 25.800H8.200z" fill="#f9cd0f" stroke="#2a1800" stroke-width="2.300" stroke-linejoin="round"/><path d="M22.300 9.500L29 13.300L16.400 24.800H10.500z" fill="#f6da7c"/><path d="M16.600 6.900L22.300 9.500L29.300 13.400M22.300 9.500L8.500 23" fill="none" stroke="#2a1800" stroke-width="1.600"/></svg><svg style="left:80.7px;top:801.8px" width="32" height="32" viewBox="0 0 32 32"><circle cx="15.100" cy="11.400" r="7.400" fill="none" stroke="#c9efff" stroke-width="4.500"/><path d="M5.700 3.400H23.300" stroke="#2a86b5" stroke-width="2.400"/><circle cx="15.100" cy="11.400" r="7.400" fill="none" stroke="#2a86b5" stroke-width="2.400"/><path d="M1.600 7.500H19.400" stroke="#0d1b26" stroke-width="2.400"/><circle cx="10.400" cy="15.700" r="7.700" fill="none" stroke="#0d1b26" stroke-width="2.400"/><path d="M19.800 21.200L29.600 31M29.600 21.200L19.800 31" stroke="#fde4e8" stroke-width="5.200"/><path d="M19.800 21.200L29.600 31M29.600 21.200L19.800 31" stroke="#e3203a" stroke-width="3.300"/></svg><svg style="left:142.7px;top:801.8px" width="32" height="32" viewBox="0 0 32 32"><path d="M10.5 21.2L19.8 12.25" stroke="#cdeefa" stroke-width="4.7"/><path d="M21.8 10.25L13.8 10.95L21.1 18.25z" fill="#cdeefa" stroke="#cdeefa" stroke-width="2" stroke-linejoin="round"/><path d="M10.5 21.2L19.8 12.25" stroke="#1e88c4" stroke-width="2.7"/><path d="M21.8 10.25L13.8 10.95L21.1 18.25z" fill="#1e88c4"/><rect x="2.600" y="23.500" width="5.600" height="5.600" fill="#e9cf5a" stroke="#141000" stroke-width="2.200"/><rect x="23.100" y="4" width="4.900" height="4.950" fill="#c9c9c9" stroke="#0d0d0d" stroke-width="2.600"/></svg><svg style="left:204.7px;top:801.8px" width="32" height="32" viewBox="0 0 32 32"><path d="M13.800 6.300L4 25.500H11.500L14.500 24V7z" fill="#d8eef9" opacity=".9"/><path d="M13.800 6.300L4 25.500H11.500" fill="none" stroke="#4a7a94" stroke-width="2.200" stroke-dasharray="4 2.500"/><path d="M16.500 2.700V28.200" stroke="#151515" stroke-width="2.400"/><path d="M17.600 6.500L28.300 24.400H17.600" fill="none" stroke="#151515" stroke-width="2.200" stroke-linejoin="miter"/></svg><svg style="left:266.6px;top:801.8px" width="32" height="32" viewBox="0 0 32 32"><path d="M2.6 24.6V21.8H5.4M7.2 21.8H10V24.6M10 26.2V29H7.2M5.4 29H2.6V26.2" fill="none" stroke="#151515" stroke-width="2.4"/><path d="M13.1 18.8L17.8 14.6" stroke="#cdeefa" stroke-width="4.7"/><path d="M19.8 12.6L12.200000000000001 13.299999999999999L19.1 20.200000000000003z" fill="#cdeefa" stroke="#cdeefa" stroke-width="2" stroke-linejoin="round"/><path d="M13.1 18.8L17.8 14.6" stroke="#1e88c4" stroke-width="2.7"/><path d="M19.8 12.6L12.200000000000001 13.299999999999999L19.1 20.200000000000003z" fill="#1e88c4"/><rect x="22.800" y="3.900" width="5.400" height="5.150" fill="#fafafa" stroke="#151515" stroke-width="2.400"/></svg><svg style="left:328.6px;top:801.8px" width="32" height="32" viewBox="0 0 32 32"><path d="M1.100 2.700H29.600V17.600L15.900 30.500H1.100M1.100 8.700H23.800V14L12 24.300H1.100" fill="none" stroke="#151515" stroke-width="2.400" stroke-linejoin="miter"/></svg><svg style="left:18.6px;top:863.8px" width="32" height="32" viewBox="0 0 32 32"><rect x="2.9" y="3.9000000000000004" width="5.400" height="5.300" fill="#fbfbfb" stroke="#151515" stroke-width="2.400"/><rect x="12.7" y="3.9000000000000004" width="5.400" height="5.300" fill="#fbfbfb" stroke="#151515" stroke-width="2.400"/><rect x="22.8" y="3.9000000000000004" width="5.400" height="5.300" fill="#fbfbfb" stroke="#151515" stroke-width="2.400"/><rect x="2.9" y="13.799999999999999" width="5.400" height="5.300" fill="#fbfbfb" stroke="#151515" stroke-width="2.400"/><rect x="12.7" y="13.799999999999999" width="5.400" height="5.300" fill="#fbfbfb" stroke="#151515" stroke-width="2.400"/><rect x="22.8" y="13.799999999999999" width="5.400" height="5.300" fill="#fbfbfb" stroke="#151515" stroke-width="2.400"/><rect x="2.9" y="23.8" width="5.400" height="5.300" fill="#b4b8b5" stroke="#151515" stroke-width="2.400"/><rect x="12.7" y="23.8" width="5.400" height="5.300" fill="#fbfbfb" stroke="#151515" stroke-width="2.400"/><rect x="22.8" y="23.8" width="5.400" height="5.300" fill="#fbfbfb" stroke="#151515" stroke-width="2.400"/></svg><svg style="left:80.7px;top:863.8px" width="32" height="32" viewBox="0 0 32 32"><path d="M2.6 18.7V15.7H5.6M11.5 15.7H14.5V18.7M14.5 24.2V27.2H11.5M5.6 27.2H2.6V24.2" fill="none" stroke="#9a9fa6" stroke-width="2"/><path d="M7.300 15.700H9.800M7.300 27.200H9.800M2.600 20.300V22.600M14.500 20.300V22.600" stroke="#9a9fa6" stroke-width="2"/><path d="M6.500 7.200C10 1.800 18.500 1.300 23.500 7" fill="none" stroke="#cdeefa" stroke-width="4.600"/><path d="M6.500 7.200C10 1.800 18.500 1.300 23.500 7" fill="none" stroke="#1e88c4" stroke-width="2.700"/><path d="M27.800 3L27.600 10.800L19.900 9.900z" fill="#1e88c4" stroke="#cdeefa" stroke-width="1" paint-order="stroke"/><path d="M24.500 16.100L30 21.600L24.500 27.100L19 21.600z" fill="#f3f2fb" stroke="#151515" stroke-width="2.600"/></svg><svg style="left:142.7px;top:863.8px" width="32" height="32" viewBox="0 0 32 32"><path d="M2.300 14.200V3.500H28.500V29.400H17.500" fill="none" stroke="#151515" stroke-width="2.600"/><path d="M2.5 22.7V19.5H5.7M9.0 19.5H12.2V22.7M12.2 26.0V29.2H9.0M5.7 29.2H2.5V26.0" fill="none" stroke="#a3a3ab" stroke-width="2.2"/><path d="M14.8 16.9L21.6 10.1" stroke="#cdeefa" stroke-width="4.7"/><path d="M23.6 8.1L16.0 8.799999999999999L22.900000000000002 15.7z" fill="#cdeefa" stroke="#cdeefa" stroke-width="2" stroke-linejoin="round"/><path d="M14.8 16.9L21.6 10.1" stroke="#1e88c4" stroke-width="2.7"/><path d="M23.6 8.1L16.0 8.799999999999999L22.900000000000002 15.7z" fill="#1e88c4"/></svg><svg style="left:204.7px;top:863.8px" width="32" height="32" viewBox="0 0 32 32"><path d="M15.800 11.400H20.500M25 11.400H28V14.500M28 24.500V27.400H25M20.500 27.400H15.800" fill="none" stroke="#8a9098" stroke-width="2"/><path d="M2.500 3.500H10.700V11.400H14.600V27.400H2.500z" fill="#b4c0c8" stroke="#10161c" stroke-width="2.400"/><path d="M17.700 19.200H24" stroke="#2c6e8a" stroke-width="2.600"/><path d="M23.400 14.700V23.700L29.300 19.200z" fill="#1e88c4" stroke="#d2f0ff" stroke-width="1" paint-order="stroke"/></svg><svg style="left:266.6px;top:863.8px" width="32" height="32" viewBox="0 0 32 32"><g stroke="#cdeefa" stroke-width="1.100" paint-order="stroke"><path d="M13.700 0.500L5.500 1.200L8 3.700L5.200 6.800L7.400 9L10.500 6.200L13.200 8.600z" fill="#1e88c4"/><path d="M13.700 30.400L5.500 29.800L8 27.300L5.200 24.200L7.400 22L10.500 24.800L13.200 22.400z" fill="#1e88c4"/></g><path d="M2.6 14.2V11.6H5.2M7.6 11.6H10.2V14.2M10.2 16.4V19H7.6M5.2 19H2.6V16.4" fill="none" stroke="#9097a3" stroke-width="2"/><rect x="19.100" y="4" width="9" height="6.900" fill="#f6f6f6" stroke="#151515" stroke-width="2.600"/><rect x="21.700" y="6.700" width="5.500" height="2" fill="#a9a9a9"/><path d="M23.700 16.800L29.300 22.400L23.700 28L18.100 22.400z" fill="#f6f6f6" stroke="#151515" stroke-width="2.600"/></svg><svg style="left:328.6px;top:863.8px" width="32" height="32" viewBox="0 0 32 32"><path d="M16.400 5.600L26.500 14.900" stroke="#cbeffc" stroke-width="5"/><path d="M3.500 5.600H16.400" stroke="#151515" stroke-width="2.400"/><path d="M26.500 14.900V28.200" stroke="#151515" stroke-width="2.400"/><path d="M15.800 5.100L26.900 15.300" stroke="#27485a" stroke-width="2.400"/></svg><svg style="left:18.6px;top:925.8px" width="32" height="32" viewBox="0 0 32 32"><defs><linearGradient id="flg" x1="0" y1="0" x2="0" y2="1"><stop offset="0" stop-color="#2a86b5"/><stop offset=".7" stop-color="#2a7fa8"/><stop offset="1" stop-color="#10222c"/></linearGradient></defs><path d="M13.400 3.500C23 3.500 28.600 9.500 28.600 20" fill="none" stroke="#cbeffc" stroke-width="5"/><path d="M1.700 3.500H13.600M28.600 19.500V30.200" stroke="#151515" stroke-width="2.400"/><path d="M13.400 3.500C23 3.500 28.600 9.500 28.600 20" fill="none" stroke="url(#flg)" stroke-width="2.400"/><path d="M12.200 14.300V24.300M7.200 19.300H17.300" stroke="#151515" stroke-width="2.400"/></svg><svg style="left:80.7px;top:925.8px" width="32" height="32" viewBox="0 0 32 32"><path d="M26.4 8.3V3.600H13.900A10.900 12.750 0 0 0 13.900 29.100H26.4V18.5" fill="none" stroke="#151515" stroke-width="2.400"/><circle cx="26.3" cy="13.5" r="4.7" fill="#c9f0ff"/><circle cx="26.3" cy="13.5" r="3.4" fill="#1e88b4"/></svg><svg style="left:142.7px;top:925.8px" width="32" height="32" viewBox="0 0 32 32"><path d="M26.5 6.3V3.600H13.900A10.900 12.750 0 0 0 13.900 29.100H26.5V24.7" fill="none" stroke="#151515" stroke-width="2.400"/><circle cx="26.5" cy="11.4" r="4.7" fill="#c9f0ff"/><circle cx="26.5" cy="11.4" r="3.4" fill="#1e88b4"/><circle cx="26.5" cy="19.5" r="4.7" fill="#c9f0ff"/><circle cx="26.5" cy="19.5" r="3.4" fill="#1e88b4"/></svg><svg style="left:204.7px;top:925.8px" width="32" height="32" viewBox="0 0 32 32"><path d="M7.500 11.400V23.100L14.200 17.300zM23.600 11.400V23.100L16.900 17.300z" fill="#d6f3ff" stroke="#d6f3ff" stroke-width="2.600" stroke-linejoin="round"/><path d="M1.700 17.300H8M23 17.300H29.400" stroke="#2a78a8" stroke-width="2.600"/><path d="M7.500 11.400V23.100L14.200 17.300zM23.600 11.400V23.100L16.900 17.300z" fill="#1e88c4"/></svg><svg style="left:266.6px;top:925.8px" width="32" height="32" viewBox="0 0 32 32"><path d="M14.500 6V24" stroke="#d5f1fd" stroke-width="5"/><path d="M1.600 3.500H27.600" stroke="#151515" stroke-width="2.600"/><path d="M14.500 6.700V10.250M14.500 12.600V16.500M14.500 18.500V22.400" stroke="#2a6a8a" stroke-width="2.400"/><path d="M14.500 24.700V30.200" stroke="#151515" stroke-width="2.400"/></svg><svg style="left:328.6px;top:925.8px" width="32" height="32" viewBox="0 0 32 32"><path d="M6.600 4.800L13.600 11.800" stroke="#c9ecfb" stroke-width="4"/><path d="M6.600 4.800L13.600 11.800" stroke="#2a7fb0" stroke-width="2"/><path d="M21.400 20L29.600 27.400" stroke="#151515" stroke-width="2.600"/><circle cx="5.400" cy="16.900" r="2.900" fill="#f7f7f7" stroke="#151515" stroke-width="2"/><circle cx="17.100" cy="26.700" r="2.900" fill="#f7f7f7" stroke="#151515" stroke-width="2"/><path d="M16.500 4.200C14.600 10 14.800 19 15.700 24L17.300 24.100C17.800 18 17.600 9 16.500 4.200z" fill="#cfe9f6" stroke="#151515" stroke-width="1.400" stroke-linejoin="round"/><path d="M27.200 17.200C22 19 13 18.900 8.200 17.900V16.800C14 16.200 22 16.400 27.200 17.200z" fill="#d9dde0" stroke="#151515" stroke-width="1.400" stroke-linejoin="round"/></svg><svg style="left:18.6px;top:987.8px" width="32" height="32" viewBox="0 0 32 32"><path d="M1.700 11.700H15M1.700 23.400H15" stroke="#ababab" stroke-width="1.800"/><path d="M16.400 3.500V30.200M16.400 11.700H29.400M16.400 23.400H29.400" stroke="#151515" stroke-width="2.600"/><path d="M1.700 28.200H6C10 28.200 10.300 24 10.300 18C10.300 10 8 4.500 12 4.200C16 4 18 7.500 22 7.300C25.500 7.100 27.500 6 29.400 5" fill="none" stroke="#cfeffb" stroke-width="4.600"/><path d="M1.700 28.200H6C10 28.200 10.300 24 10.300 18C10.300 10 8 4.500 12 4.200C16 4 18 7.500 22 7.300C25.500 7.100 27.500 6 29.400 5" fill="none" stroke="#2a7fa0" stroke-width="2.400"/></svg><svg style="left:80.7px;top:987.8px" width="32" height="32" viewBox="0 0 32 32"><path d="M12.300 0.700V3.600M12.300 5.600V9.500M1.600 11.400H4.900M7.700 11.400H12.300" stroke="#d5edfb" stroke-width="4.400"/><path d="M12.300 0.700V3.600M12.300 5.600V9.500M1.600 11.400H4.900M7.700 11.400H12.300" stroke="#3a7ab0" stroke-width="2.300"/><path d="M14.700 30.200V16.400Q14.700 13.400 17.700 13.400H29.100" fill="none" stroke="#151515" stroke-width="2.400"/><circle cx="22.7" cy="13.4" r="2.6" fill="#3a78b0" stroke="#0c1c30" stroke-width="2"/><circle cx="14.5" cy="23.4" r="3" fill="#3a78b0" stroke="#0c1c30" stroke-width="2"/></svg><svg style="left:142.7px;top:987.8px" width="32" height="32" viewBox="0 0 32 32"><defs><clipPath id="ehc"><rect x="4.700" y="7.900" width="21" height="21.100"/></clipPath></defs><rect x="4.700" y="7.900" width="21" height="21.100" fill="#c8edfc"/><g clip-path="url(#ehc)" stroke="#2c5e73" stroke-width="1.800"><path d="M-4 22L22 -4M-4 30.700L30.700 -4M-4 39.400L39.400 -4M4.700 39.400L42 2.100M13.400 39.400L42 10.800"/></g><rect x="4.700" y="7.900" width="21" height="21.100" fill="none" stroke="#0b1822" stroke-width="2.400"/><g transform="translate(0.2 0)"><path d="M33 5.400V12.600H28L23.500 15.800L18 16L13.500 13.400L8.300 13.400L14.200 6.300Q15.500 3.500 18.500 3.500H26L29.500 5.400z" fill="#f6c68c" stroke="#1a1208" stroke-width="2" stroke-linejoin="round"/><path d="M14.200 10.500L16.800 14.200M16.800 9.200L19.600 13.600M19.600 8.800L22.200 12.600" fill="none" stroke="#1a1208" stroke-width="1.700"/></g></svg><svg style="left:204.7px;top:987.8px" width="32" height="32" viewBox="0 0 32 32"><rect x="11.100" y="11.800" width="15" height="15.200" fill="#aebfc6" stroke="#0f2230" stroke-width="2.400"/><rect x="4.800" y="5.800" width="15.200" height="15.100" fill="#f8cb10" stroke="#1a1200" stroke-width="2.400"/></svg><svg style="left:266.6px;top:987.8px" width="32" height="32" viewBox="0 0 32 32"><path d="M4.400 16.300L14.300 27.600" stroke="#151515" stroke-width="2.200"/><circle cx="4.4" cy="16.3" r="2.9" fill="#e9d75a" stroke="#2a2400" stroke-width="2.2"/><circle cx="24.5" cy="16.3" r="2.9" fill="#e9d75a" stroke="#2a2400" stroke-width="2.2"/><circle cx="14.3" cy="27.6" r="2.9" fill="#e9d75a" stroke="#2a2400" stroke-width="2.2"/><g transform="translate(0.4 -2.6)"><path d="M33 5.400V12.600H28L23.500 15.800L18 16L13.500 13.400L8.300 13.400L14.200 6.300Q15.500 3.500 18.500 3.500H26L29.500 5.400z" fill="#f6c68c" stroke="#1a1208" stroke-width="2" stroke-linejoin="round"/><path d="M14.200 10.500L16.800 14.200M16.800 9.200L19.600 13.600M19.600 8.800L22.200 12.600" fill="none" stroke="#1a1208" stroke-width="1.700"/></g></svg><svg style="left:328.6px;top:987.8px" width="32" height="32" viewBox="0 0 32 32"><path d="M14 3.300C9.500 3.800 6.800 7 6.700 11.500M16.750 28.200C21 27.600 24.300 24.500 24.600 20" fill="none" stroke="#cdeefa" stroke-width="4.600"/><path d="M14 3.300C9.500 3.800 6.800 7 6.700 11.500M16.750 28.200C21 27.600 24.300 24.500 24.600 20" fill="none" stroke="#1e88c4" stroke-width="2.600"/><path d="M6.600 16.700L1.700 10.800H11.800zM24.600 14.700L19.700 20.400H29.400z" fill="#1e88c4" stroke="#cdeefa" stroke-width="1" paint-order="stroke"/><path d="M9.500 22C11.500 15 16 11 21.500 9" fill="none" stroke="#151515" stroke-width="2.400"/><circle cx="24.6" cy="7.5" r="3.7" fill="#e9c92f" stroke="#1e1600" stroke-width="2.1"/><circle cx="8.2" cy="25.6" r="3.7" fill="#e9c92f" stroke="#1e1600" stroke-width="2.1"/></svg><svg style="left:18.6px;top:1049.8px" width="32" height="32" viewBox="0 0 32 32"><path d="M5.600 1.400H25.500M5.600 31.300H25.500M0.400 6.700V26.300M30.600 6.700V26.300" stroke="#151515" stroke-width="2.400"/><path d="M7.700 5.600H23.200M7.700 27.400H23.200M4.400 8.800V23.900M26.500 8.800V23.900" stroke="#8a97a6" stroke-width="1.800"/><rect x="6.300" y="7.100" width="18.300" height="18.600" fill="#c5f0ff"/><rect x="7.700" y="8.500" width="15.500" height="15.800" fill="#0f8fe8"/></svg><svg style="left:80.7px;top:1049.8px" width="32" height="32" viewBox="0 0 32 32"><path d="M5.600 1.400H25.500M5.600 31.300H25.500M0.400 6.700V26.300M30.600 6.700V26.300" stroke="#151515" stroke-width="2.400"/><path d="M7.700 5.600H23.200M7.700 27.400H23.200M4.400 8.800V23.900M26.500 8.800V23.900" stroke="#8a97a6" stroke-width="1.800"/><rect x="6" y="7" width="19" height="19" fill="#e4eefa"/><path d="M8.800 22.100V13.900Q8.800 11.700 11 11.700H12.200Q14.400 11.700 14.400 13.900V22.100M8.800 16.800H14.400" fill="none" stroke="#1d7fa4" stroke-width="2.300"/><circle cx="20.500" cy="13" r="3" fill="#1e88b0"/></svg><div style="position:absolute;left:2px;top:1098.0px;width:383px;height:38px;box-sizing:border-box;border:1.5px solid #b7b7b7;background:#ededed;box-shadow:inset 0 0 0 1px #f3f3f3"></div><span class="t" style="left:6.6px;top:1105.5px;font-size:26px;font-weight:700;color:#000;letter-spacing:0.786px;">Modeling</span><svg style="left:353.500px;top:1109.5px" width="17" height="16" viewBox="0 0 17 16"><path d="M8.500 0L17 16H0z" fill="#7b7b7b"/></svg><svg style="left:18.6px;top:1153.8px" width="32" height="32" viewBox="0 0 32 32"><path d="M17.700 2L29.800 7.700L14.200 13.200L3.300 7z" fill="#a9bcc8"/><path d="M3.300 7L14.200 13.200V30.300L3.300 25.200z" fill="#9ab0c3"/><path d="M14.200 13.200L29.800 7.700V24.400L14.200 30.300z" fill="#8fa6c2"/><path d="M17.700 2L29.800 7.700V24.400L14.200 30.300L3.300 25.200V7zM3.300 7L14.200 13.200L29.800 7.700M14.200 13.200V30.300" fill="none" stroke="#0f1e2a" stroke-width="2.400" stroke-linejoin="round"/></svg><svg style="left:80.7px;top:1153.8px" width="32" height="32" viewBox="0 0 32 32"><defs><linearGradient id="cng" x1="0" y1="0" x2="1" y2="0"><stop offset="0" stop-color="#94a9c0"/><stop offset=".5" stop-color="#9fb3c4"/><stop offset=".58" stop-color="#b0c4cf"/><stop offset="1" stop-color="#9db2c2"/></linearGradient></defs><path d="M15.500 1.500L30 24.800C26 28.500 21 30.900 15.500 30.900C10 30.900 5 28.500 1 24.800z" fill="url(#cng)" stroke="#0f1e2a" stroke-width="2.400" stroke-linejoin="round"/></svg><svg style="left:142.7px;top:1153.8px" width="32" height="32" viewBox="0 0 32 32"><path d="M4.800 7.100V26.800C4.800 29.200 9.500 30.900 15.450 30.900C21.400 30.900 26.100 29.200 26.100 26.800V7.100z" fill="#93a8c0" stroke="#0f1e2a" stroke-width="2.400"/><ellipse cx="15.450" cy="7.100" rx="10.650" ry="3.300" fill="#a9bcc8" stroke="#0f1e2a" stroke-width="2.400"/></svg><svg style="left:204.7px;top:1153.8px" width="32" height="32" viewBox="0 0 32 32"><path d="M15.600 3L2.500 25.500L15.400 32.600z" fill="#9ab0c3"/><path d="M15.600 3L29 25.500L15.400 32.600z" fill="#a6bbc9"/><path d="M15.600 3L29 25.500L15.400 32.600L2.500 25.500z" fill="none" stroke="#0f1e2a" stroke-width="2.400" stroke-linejoin="miter"/></svg><svg style="left:266.6px;top:1153.8px" width="32" height="32" viewBox="0 0 32 32"><defs><clipPath id="sphc"><circle cx="15.500" cy="16.300" r="14.700"/></clipPath></defs><circle cx="15.500" cy="16.300" r="14.700" fill="#a9bec8"/><g clip-path="url(#sphc)"><path d="M3 27C14 27 25 20 26 5L36 5V36H3z" fill="#8fa6c0"/></g><circle cx="15.500" cy="16.300" r="14.700" fill="none" stroke="#0a0f14" stroke-width="2.600"/></svg><svg style="left:328.6px;top:1153.8px" width="32" height="32" viewBox="0 0 32 32"><defs><linearGradient id="trg" x1="0" y1="0" x2="0" y2="1"><stop offset="0" stop-color="#a9b5c0"/><stop offset=".5" stop-color="#95a8bd"/><stop offset="1" stop-color="#8fa5c0"/></linearGradient></defs><ellipse cx="15.400" cy="17.300" rx="14.800" ry="13.500" fill="url(#trg)" stroke="#0a0f14" stroke-width="2.600"/><ellipse cx="15.400" cy="15.300" rx="6.800" ry="3.500" fill="#eef7fb" stroke="#0a0f14" stroke-width="2.400"/></svg><svg style="left:18.6px;top:1215.8px" width="32" height="32" viewBox="0 0 32 32"><path d="M5.200 4.400L10.900 2.200L27.600 29.600L22.600 32.100z" fill="#a9bcc8"/><path d="M5.200 4.400V28.800L22.600 32.100z" fill="#93a8c0"/><path d="M5.200 4.400L10.900 2.200L27.600 29.600L22.600 32.100L5.200 28.800zM5.200 4.400L22.600 32.100" fill="none" stroke="#0f1e2a" stroke-width="2.400" stroke-linejoin="round"/></svg><svg style="left:80.7px;top:1215.8px" width="32" height="32" viewBox="0 0 32 32"><path d="M12.800 2.100H31.800L19.400 26.200H-0.900z" fill="#a7b9c3"/><path d="M-0.900 26.200H19.400V32.900H-0.900z" fill="#93a8c0"/><path d="M19.400 26.200L31.800 2.100V8.500L19.400 32.900z" fill="#93a8c0"/><path d="M12.800 2.100H31.800V8.500L19.400 32.900H-0.900V26.200zM-0.900 26.200H19.400L31.800 2.100M19.400 26.200V32.900M8.100 10.100H27.700M3.600 18.200H23.500M19.100 2.100L5.800 26.200M25.400 2.100L12.600 26.200" fill="none" stroke="#0f1e2a" stroke-width="2.300" stroke-linejoin="round"/></svg><svg style="left:142.7px;top:1215.8px" width="32" height="32" viewBox="0 0 32 32"><path d="M1.200 9.500L10.100 14.200L22.200 9.800V19.800L10.100 23.500L1.200 20.800z" fill="#fdfdfd"/><path d="M12.100 1.400L22.200 6.100L10.100 10.600L1.200 5.700z" fill="#93a8c0" stroke="#0f1e2a" stroke-width="2.400" stroke-linejoin="round"/><path d="M1.200 20.800L10.100 23.500L22.200 19.800V28.600L10.100 32.500L1.200 28z" fill="#93a8c0" stroke="#0f1e2a" stroke-width="2.400" stroke-linejoin="round"/><path d="M10.100 23.500V32.500" stroke="#0f1e2a" stroke-width="2.400"/><path d="M1.200 6.500V21M22.200 6.500V20M10.100 11V23" stroke="#0f1e2a" stroke-width="2.400" stroke-dasharray="2.200 2.600"/><path d="M30.200 5V14.200" stroke="#1e88c8" stroke-width="2.600"/><path d="M30.200 0.700L34.600 6.200H25.800z" fill="#1e88c8" stroke="#d2efff" stroke-width=".8" paint-order="stroke"/></svg><svg style="left:204.7px;top:1215.8px" width="32" height="32" viewBox="0 0 32 32"><path d="M2.900 6.200C2.900 10 8.500 11 8.500 17.300C8.500 24 2.900 25 2.900 29C2.900 31.500 8 32.900 15.400 32.900C22.800 32.900 27.900 31.500 27.900 29C27.900 25 22.300 24 22.300 17.300C22.300 11 27.900 10 27.900 6.200z" fill="#93a8c0" stroke="#0f1e2a" stroke-width="2.400"/><ellipse cx="15.400" cy="6.200" rx="12.500" ry="4" fill="#a9bcc8" stroke="#0f1e2a" stroke-width="2.400"/></svg><svg style="left:266.6px;top:1215.8px" width="32" height="32" viewBox="0 0 32 32"><path d="M5.600 2.100H27.900L18.600 12.500V32.900H13.200V12.500L15 6.700H2.800z" fill="#b5c5cd"/><path d="M2.800 6.700H15V12.500H13.200V20.900H2.800z" fill="#93a8c0"/><path d="M27.900 2.100V22L18.600 32.900V12.500z" fill="#8fa6c2"/><path d="M5.600 2.100H27.900V22L18.600 32.900H13.200V20.900H2.800V6.700zM2.800 6.700H16.500L13.200 11.200V20.900M27.900 2.100L18.600 12.500V32.900M16.500 6.700H21.500" fill="none" stroke="#0f1e2a" stroke-width="2.400" stroke-linejoin="round"/></svg><svg style="left:328.6px;top:1215.8px" width="32" height="32" viewBox="0 0 32 32"><path d="M-4.300 27.400L5 25.300M26 27.600L35.100 24.700M25 26.300L35.100 29.800M18 29.600L5.800 34.500M10 29.600L21 34.100" stroke="#111" stroke-width="2.200"/><path d="M3 12.300L14 17.600L28.200 12.500V25.600L14 30.200L3 25.600z" fill="#b9c7d0"/><path d="M3 14.500V25.600M28.200 14.700V25.600M14 19.800V30.200" stroke="#0f1e2a" stroke-width="2.400" stroke-dasharray="3.200 4.800 3.200 20"/><path d="M15.600 7.200L28.200 12.200L14 17.600L3 12z" fill="#9aabbb" stroke="#0f1e2a" stroke-width="2.400" stroke-linejoin="round"/><path d="M7.200 1.500V7" stroke="#1e7fb8" stroke-width="2.600"/><path d="M7.200 -2.500L11.600 3.200H2.800z" fill="#1e88c8" stroke="#d2efff" stroke-width=".8" paint-order="stroke"/></svg><svg style="left:18.6px;top:1277.8px" width="32" height="32" viewBox="0 0 32 32"><path d="M6 1.500C10 -2.600 18 -2.800 23 0.500" fill="none" stroke="#6fbce8" stroke-width="2.600"/></svg><svg style="left:328.6px;top:1277.8px" width="32" height="32" viewBox="0 0 32 32"><path d="M-4.500 -0.500L20 -3.200" fill="none" stroke="#111" stroke-width="2.400"/></svg></div>
<svg style="left:166px;top:1385px" width="88" height="22" viewBox="0 0 88 22"><path d="M0.0 11L12.5 0V22z" fill="#000"/><path d="M18.4 11L30.9 0V22z" fill="#000"/><path d="M36.8 11L49.3 0V22z" fill="#000"/><path d="M55.2 11L67.7 0V22z" fill="#000"/><path d="M73.6 11L86.1 0V22z" fill="#000"/></svg>
<div class="abs" style="left:1790px;top:50px;width:606px;height:1374px;background:#ececec;border-radius:12px 12px 12px 12px;box-shadow:0 0 0 1px rgba(0,0,0,.2),0 3px 22px rgba(0,0,0,.2);overflow:hidden"><div class="abs" style="left:0;top:0;width:606px;height:37.500px;background:linear-gradient(180deg,#e9eef1 0px,#ececec 9px);border-bottom:1px solid #cfcfcf"></div></div>
<div style="position:absolute;left:1800px;top:59.5px;width:18px;height:18px;border-radius:9px;background:#d3d3d3;box-shadow:inset 0 0 0 1px #c4c4c4;"></div>
<div style="position:absolute;left:1830px;top:59.5px;width:18px;height:18px;border-radius:9px;background:#d3d3d3;box-shadow:inset 0 0 0 1px #c4c4c4;"></div>
<div style="position:absolute;left:1860px;top:59.5px;width:18px;height:18px;border-radius:9px;background:#d3d3d3;box-shadow:inset 0 0 0 1px #c4c4c4;"></div>
<span class="t" style="left:2038px;top:58.0px;font-size:22px;color:#b4b4b4;letter-spacing:0.859px;">Properties</span>
<div style="position:absolute;left:1818px;top:113px;width:548px;height:40px;background:#f5f5f5;border-radius:11px;box-shadow:0 0 0 1px rgba(0,0,0,.04),0 1px 2.5px rgba(0,0,0,.16);"></div>
<span class="t" style="left:1834px;top:117.5px;font-size:25.5px;color:#505050;letter-spacing:1.037px;">No Selection</span>
<svg style="left:2338px;top:121px" width="16" height="24" viewBox="0 0 16 24"><path d="M2.2 9.2L8 3.4l5.8 5.8M2.2 14.8L8 20.6l5.8-5.8" fill="none" stroke="#6a6a6a" stroke-width="2.3" stroke-linecap="round" stroke-linejoin="round"/></svg>
<div style="position:absolute;left:1811.7px;top:161.7px;width:52px;height:52px;box-sizing:border-box;border:2px solid #cdcdcd;background:#e9e9e9;box-shadow:0 0 1px #d5d5d5;"></div>
<div style="position:absolute;left:1875.7px;top:161.7px;width:52px;height:52px;box-sizing:border-box;border:2px solid #cdcdcd;background:#e9e9e9;box-shadow:0 0 1px #d5d5d5;"></div>
<div style="position:absolute;left:1939.7px;top:161.7px;width:52px;height:52px;box-sizing:border-box;border:2px solid #cdcdcd;background:#e9e9e9;box-shadow:0 0 1px #d5d5d5;"></div>
<div style="position:absolute;left:2003.7px;top:161.7px;width:52px;height:52px;box-sizing:border-box;border:2px solid #b2b2b2;background:linear-gradient(180deg,#f3f3f3,#e9e9e9 45%%,#f1f1f1);box-shadow:0 0 1px #bdbdbd;"></div>
<div style="position:absolute;left:2067.7px;top:161.7px;width:52px;height:52px;box-sizing:border-box;border:2px solid #b2b2b2;background:linear-gradient(180deg,#f3f3f3,#e9e9e9 45%%,#f1f1f1);box-shadow:0 0 1px #bdbdbd;"></div>
<svg style="left:1812px;top:162px" width="51" height="51" viewBox="0 0 51 51" opacity=".45"><rect x="12" y="14" width="28" height="26" fill="none" stroke="#d9dcc4" stroke-width="1.5" stroke-dasharray="5 4"/><circle cx="25" cy="28" r="8.5" fill="none" stroke="#c9ccd4" stroke-width="3"/><circle cx="22" cy="30" r="6" fill="none" stroke="#e0dcb0" stroke-width="2.5"/><path d="M24 15c5-2 10 0 12 4l2-3" fill="none" stroke="#cfe0cf" stroke-width="2"/></svg>
<svg style="left:1876px;top:162px" width="51" height="51" viewBox="0 0 51 51" opacity=".55"><path d="M14 14v16M19 14v16" stroke="#d6dde4" stroke-width="2" stroke-dasharray="4 3"/><path d="M24 17v18l4.4-4 3.2 7.4 3-1.3-3.2-7.2h6z" fill="#ececec" stroke="#bdbdbd" stroke-width="1.6" stroke-linejoin="round"/></svg>
<svg style="left:1940px;top:162px" width="51" height="51" viewBox="0 0 51 51" opacity=".55"><rect x="13" y="13" width="25" height="24" fill="none" stroke="#d0d8e0" stroke-width="2" stroke-dasharray="6 4"/><path d="M24 19v18l4.4-4 3.2 7.4 3-1.3-3.2-7.2h6z" fill="#ececec" stroke="#bdbdbd" stroke-width="1.6" stroke-linejoin="round"/></svg>
<svg style="left:2004px;top:162px" width="51" height="51" viewBox="0 0 51 51"><path d="M12 13.5h4M19 13.5h17M12 20h4M19 20h17M12 26.500h4M19 26.500h9" stroke="#2f86c0" stroke-width="2"/><path d="M35.500 22.500l-6.500 11.500h5l-2.800 8.500 10.300-13.500h-5.400l3.800-6.500z" fill="#f5c518" stroke="#3a3000" stroke-width="1.300" stroke-linejoin="round"/></svg>
<span class="t" style="left:2086.3px;top:172.5px;font-size:32px;font-weight:700;color:#0a0a0a;transform:scaleX(.84);transform-origin:0 0;">?</span>
<div style="position:absolute;left:2346px;top:228px;width:27px;height:1173px;background:#fafafa;"></div>
<div style="position:absolute;left:2352px;top:232px;width:16px;height:1116px;background:#c1c1c1;border-radius:8px;"></div>
<div style="position:absolute;left:1819px;top:228px;width:493px;height:365px;background:#e6e6e6;border-radius:9px;box-shadow:0 0 0 1px rgba(0,0,0,.03);"></div>
<div style="position:absolute;left:1818px;top:232.0px;width:494px;height:38px;background:#dfe3fb;border:1px solid #a3a7cb;border-bottom:1.5px solid #9a9ec3;box-sizing:border-box;"></div><span class="t" style="left:1828px;top:239.7px;font-size:26.5px;font-weight:700;color:#a9aed0;letter-spacing:0.718px;">General</span><svg style="left:2282px;top:246.5px" width="24" height="14" viewBox="0 0 24 14"><path d="M2.5 12L12 3l9.5 9" fill="none" stroke="#a9aed0" stroke-width="3.6" stroke-linecap="butt" stroke-linejoin="miter"/></svg>
<span class="t" style="left:1842px;top:292.0px;font-size:26px;color:#b1b1b1;letter-spacing:0.588px;">LineColor</span>
<span class="t" style="left:1842px;top:336.0px;font-size:26px;color:#b1b1b1;letter-spacing:-0.011px;">Layer</span>
<span class="t" style="left:1842px;top:380.0px;font-size:26px;color:#b1b1b1;letter-spacing:0.817px;">LineStyle</span>
<span class="t" style="left:1842px;top:424.5px;font-size:26px;color:#b1b1b1;letter-spacing:0.475px;">LineScale</span>
<span class="t" style="left:1842px;top:470.0px;font-size:26px;color:#b1b1b1;letter-spacing:0.821px;">LineWeight</span>
<span class="t" style="left:1842px;top:514.0px;font-size:26px;color:#b1b1b1;letter-spacing:0.828px;">Hyperlink</span>
<span class="t" style="left:1842px;top:560.0px;font-size:26px;color:#b1b1b1;letter-spacing:0.681px;">Transparency</span>
<div style="position:absolute;left:2082px;top:286.5px;width:218px;height:39px;background:#f4f4f4;border-radius:10px;box-shadow:0 0 0 1px rgba(0,0,0,.035),0 1px 2px rgba(0,0,0,.13);"></div><svg style="left:2272px;top:294.3px" width="16" height="24" viewBox="0 0 16 24"><path d="M2.2 9.2L8 3.4l5.8 5.8M2.2 14.8L8 20.6l5.8-5.8" fill="none" stroke="#777" stroke-width="2.3" stroke-linecap="round" stroke-linejoin="round"/></svg>
<div class="abs" style="left:2105.500px;top:292px;width:21px;height:21px;border-radius:50%;box-sizing:border-box;border:1.3px solid #555;background:#fafafa"></div>
<span class="t" style="left:2138px;top:290.8px;font-size:26px;color:#5e5e5e;letter-spacing:0.602px;">ByLayer</span>
<div style="position:absolute;left:2082px;top:331px;width:218px;height:39px;background:#f4f4f4;border-radius:10px;box-shadow:0 0 0 1px rgba(0,0,0,.035),0 1px 2px rgba(0,0,0,.13);"></div><svg style="left:2272px;top:338.8px" width="16" height="24" viewBox="0 0 16 24"><path d="M2.2 9.2L8 3.4l5.8 5.8M2.2 14.8L8 20.6l5.8-5.8" fill="none" stroke="#777" stroke-width="2.3" stroke-linecap="round" stroke-linejoin="round"/></svg><span class="t" style="left:2097.7px;top:335.3px;font-size:26px;color:#5e5e5e;">0</span>
<div style="position:absolute;left:2082px;top:375px;width:218px;height:39px;background:#f4f4f4;border-radius:10px;box-shadow:0 0 0 1px rgba(0,0,0,.035),0 1px 2px rgba(0,0,0,.13);"></div><svg style="left:2272px;top:382.8px" width="16" height="24" viewBox="0 0 16 24"><path d="M2.2 9.2L8 3.4l5.8 5.8M2.2 14.8L8 20.6l5.8-5.8" fill="none" stroke="#777" stroke-width="2.3" stroke-linecap="round" stroke-linejoin="round"/></svg><span class="t" style="left:2097.7px;top:379.3px;font-size:26px;color:#5e5e5e;letter-spacing:0.602px;">ByLayer</span>
<div style="position:absolute;left:2228px;top:380px;width:32.5px;height:30px;overflow:hidden"><span class="t" style="left:4px;top:-0.7px;font-size:26px;color:#5e5e5e;letter-spacing:0.195px;">So</span></div>
<div style="position:absolute;left:2078px;top:418.5px;width:228px;height:37px;background:#efefef;box-shadow:0 1px 1.5px rgba(0,0,0,.18),0 0 0 1px rgba(0,0,0,.025);"></div><span class="t" style="left:2079px;top:424.0px;font-size:26px;color:#000;letter-spacing:1.295px;">1.0000</span>
<div style="position:absolute;left:2082px;top:464.5px;width:218px;height:40px;background:#f4f4f4;border-radius:10px;box-shadow:0 0 0 1px rgba(0,0,0,.035),0 1px 2px rgba(0,0,0,.13);"></div><svg style="left:2272px;top:472.8px" width="16" height="24" viewBox="0 0 16 24"><path d="M2.2 9.2L8 3.4l5.8 5.8M2.2 14.8L8 20.6l5.8-5.8" fill="none" stroke="#777" stroke-width="2.3" stroke-linecap="round" stroke-linejoin="round"/></svg>
<div style="position:absolute;left:2101px;top:482px;width:64px;height:1.6px;background:#555;"></div>
<div style="position:absolute;left:2170px;top:468px;width:93.5px;height:32px;overflow:hidden"><span class="t" style="left:1px;top:1.3px;font-size:26px;color:#5e5e5e;letter-spacing:0.602px;">ByLayer</span></div>
<div style="position:absolute;left:2078px;top:509px;width:228px;height:37px;background:#efefef;box-shadow:0 1px 1.5px rgba(0,0,0,.18),0 0 0 1px rgba(0,0,0,.025);"></div>
<div style="position:absolute;left:2078px;top:554.5px;width:228px;height:37px;background:#efefef;box-shadow:0 1px 1.5px rgba(0,0,0,.18),0 0 0 1px rgba(0,0,0,.025);"></div><span class="t" style="left:2079px;top:560.0px;font-size:26px;color:#000;letter-spacing:0.602px;">ByLayer</span>
<div style="position:absolute;left:1819px;top:612px;width:493px;height:238px;background:#e6e6e6;border-radius:9px;box-shadow:0 0 0 1px rgba(0,0,0,.03);"></div>
<div style="position:absolute;left:1818px;top:616.0px;width:494px;height:38px;background:#dfe3fb;border:1px solid #a3a7cb;border-bottom:1.5px solid #9a9ec3;box-sizing:border-box;"></div><span class="t" style="left:1828px;top:623.7px;font-size:26.5px;font-weight:700;color:#a9aed0;letter-spacing:1.033px;">PrintStyle</span><svg style="left:2282px;top:630.5px" width="24" height="14" viewBox="0 0 24 14"><path d="M2.5 12L12 3l9.5 9" fill="none" stroke="#a9aed0" stroke-width="3.6" stroke-linecap="butt" stroke-linejoin="miter"/></svg>
<span class="t" style="left:1842px;top:676.0px;font-size:26px;color:#b1b1b1;letter-spacing:1.049px;">Style</span>
<span class="t" style="left:1842px;top:720.0px;font-size:26px;color:#b1b1b1;letter-spacing:0.710px;">Table</span>
<span class="t" style="left:1842px;top:764.5px;font-size:26px;color:#b1b1b1;letter-spacing:1.710px;">Type</span>
<span class="t" style="left:1842px;top:809.5px;font-size:26px;color:#b1b1b1;letter-spacing:0.624px;">Display</span>
<div style="position:absolute;left:2082px;top:670.5px;width:218px;height:39.5px;background:#f4f4f4;border-radius:10px;box-shadow:0 0 0 1px rgba(0,0,0,.035),0 1px 2px rgba(0,0,0,.13);"></div><svg style="left:2272px;top:678.55px" width="16" height="24" viewBox="0 0 16 24"><path d="M2.2 9.2L8 3.4l5.8 5.8M2.2 14.8L8 20.6l5.8-5.8" fill="none" stroke="#777" stroke-width="2.3" stroke-linecap="round" stroke-linejoin="round"/></svg><span class="t" style="left:2097.7px;top:675.0px;font-size:26px;color:#5e5e5e;letter-spacing:1.170px;">ByColor</span>
<div style="position:absolute;left:2082px;top:714.5px;width:218px;height:39.5px;background:#f4f4f4;border-radius:10px;box-shadow:0 0 0 1px rgba(0,0,0,.035),0 1px 2px rgba(0,0,0,.13);"></div><svg style="left:2272px;top:722.55px" width="16" height="24" viewBox="0 0 16 24"><path d="M2.2 9.2L8 3.4l5.8 5.8M2.2 14.8L8 20.6l5.8-5.8" fill="none" stroke="#777" stroke-width="2.3" stroke-linecap="round" stroke-linejoin="round"/></svg><span class="t" style="left:2097.7px;top:719.0px;font-size:26px;color:#5e5e5e;letter-spacing:0.947px;">None</span>
<div style="position:absolute;left:2078px;top:759px;width:228px;height:37px;background:#efefef;box-shadow:0 1px 1.5px rgba(0,0,0,.18),0 0 0 1px rgba(0,0,0,.025);"></div><span class="t" style="left:2079px;top:764.5px;font-size:26px;color:#000;letter-spacing:1.280px;">None</span>
<div style="position:absolute;left:2082px;top:804.5px;width:218px;height:40px;background:#f4f4f4;border-radius:10px;box-shadow:0 0 0 1px rgba(0,0,0,.035),0 1px 2px rgba(0,0,0,.13);"></div><svg style="left:2272px;top:812.8px" width="16" height="24" viewBox="0 0 16 24"><path d="M2.2 9.2L8 3.4l5.8 5.8M2.2 14.8L8 20.6l5.8-5.8" fill="none" stroke="#777" stroke-width="2.3" stroke-linecap="round" stroke-linejoin="round"/></svg><span class="t" style="left:2097.7px;top:809.3px;font-size:26px;color:#5e5e5e;letter-spacing:1.762px;">No</span>
<div style="position:absolute;left:1819px;top:868px;width:493px;height:279px;background:#e6e6e6;border-radius:9px;box-shadow:0 0 0 1px rgba(0,0,0,.03);"></div>
<div style="position:absolute;left:1818px;top:872.0px;width:494px;height:38px;background:#dfe3fb;border:1px solid #a3a7cb;border-bottom:1.5px solid #9a9ec3;box-sizing:border-box;"></div><span class="t" style="left:1828px;top:879.7px;font-size:26.5px;font-weight:700;color:#a9aed0;letter-spacing:1.697px;">View</span><svg style="left:2282px;top:886.5px" width="24" height="14" viewBox="0 0 24 14"><path d="M2.5 12L12 3l9.5 9" fill="none" stroke="#a9aed0" stroke-width="3.6" stroke-linecap="butt" stroke-linejoin="miter"/></svg>
<span class="t" style="left:1842px;top:928.0px;font-size:26px;color:#b1b1b1;letter-spacing:0.342px;">Center X</span>
<span class="t" style="left:1842px;top:974.0px;font-size:26px;color:#b1b1b1;letter-spacing:0.266px;">Center Y</span>
<span class="t" style="left:1842px;top:1020.0px;font-size:26px;color:#b1b1b1;letter-spacing:0.407px;">Center Z</span>
<span class="t" style="left:1842px;top:1066.0px;font-size:26px;color:#b1b1b1;letter-spacing:0.768px;">Height</span>
<span class="t" style="left:1842px;top:1112.0px;font-size:26px;color:#b1b1b1;letter-spacing:1.510px;">Width</span>
<div style="position:absolute;left:2076px;top:922.5px;width:228px;height:37px;background:#efefef;box-shadow:0 1px 1.5px rgba(0,0,0,.18),0 0 0 1px rgba(0,0,0,.025);"></div><span class="t" style="left:2077px;top:928.0px;font-size:26px;color:#000;letter-spacing:2.295px;">6.0000</span>
<div style="position:absolute;left:2076px;top:968.5px;width:228px;height:37px;background:#efefef;box-shadow:0 1px 1.5px rgba(0,0,0,.18),0 0 0 1px rgba(0,0,0,.025);"></div><span class="t" style="left:2077px;top:974.0px;font-size:26px;color:#000;letter-spacing:1.895px;">4.5000</span>
<div style="position:absolute;left:2076px;top:1014.5px;width:228px;height:37px;background:#efefef;box-shadow:0 1px 1.5px rgba(0,0,0,.18),0 0 0 1px rgba(0,0,0,.025);"></div><span class="t" style="left:2077px;top:1020.0px;font-size:26px;color:#000;letter-spacing:2.295px;">0.0000</span>
<div style="position:absolute;left:2076px;top:1060.5px;width:228px;height:37px;background:#efefef;box-shadow:0 1px 1.5px rgba(0,0,0,.18),0 0 0 1px rgba(0,0,0,.025);"></div><span class="t" style="left:2077px;top:1066.0px;font-size:26px;color:#000;letter-spacing:0.990px;">11.0057</span>
<div style="position:absolute;left:2076px;top:1106.5px;width:228px;height:37px;background:#efefef;box-shadow:0 1px 1.5px rgba(0,0,0,.18),0 0 0 1px rgba(0,0,0,.025);"></div><span class="t" style="left:2077px;top:1112.0px;font-size:26px;color:#000;letter-spacing:2.169px;">20.6659</span>
<div style="position:absolute;left:1818px;top:1164px;width:494px;height:237px;background:#e5e5e5;border-radius:9px 9px 0 0;box-shadow:0 0 0 1px rgba(0,0,0,.03);"></div>
<div style="position:absolute;left:1818px;top:1168.0px;width:494px;height:38px;background:#dfe3fb;border:1px solid #a3a7cb;border-bottom:1.5px solid #9a9ec3;box-sizing:border-box;"></div><span class="t" style="left:1828px;top:1175.7px;font-size:26.5px;font-weight:700;color:#a9aed0;letter-spacing:1.029px;">Misc</span><svg style="left:2282px;top:1182.5px" width="24" height="14" viewBox="0 0 24 14"><path d="M2.5 12L12 3l9.5 9" fill="none" stroke="#a9aed0" stroke-width="3.6" stroke-linecap="butt" stroke-linejoin="miter"/></svg>
<span class="t" style="left:1842px;top:1228.5px;font-size:26px;color:#b1b1b1;letter-spacing:0.535px;">CS icon on</span>
<span class="t" style="left:1842px;top:1272.5px;font-size:26px;color:#b1b1b1;letter-spacing:0.577px;">CS icon at origin</span>
<span class="t" style="left:1842px;top:1316.0px;font-size:26px;color:#b1b1b1;letter-spacing:0.286px;">CCS per View ...</span>
<span class="t" style="left:1842px;top:1360.0px;font-size:26px;color:#b1b1b1;letter-spacing:0.119px;">CCS name</span>
<div style="position:absolute;left:2082px;top:1223px;width:218px;height:39.5px;background:#f4f4f4;border-radius:10px;box-shadow:0 0 0 1px rgba(0,0,0,.035),0 1px 2px rgba(0,0,0,.13);"></div><svg style="left:2272px;top:1231.05px" width="16" height="24" viewBox="0 0 16 24"><path d="M2.2 9.2L8 3.4l5.8 5.8M2.2 14.8L8 20.6l5.8-5.8" fill="none" stroke="#777" stroke-width="2.3" stroke-linecap="round" stroke-linejoin="round"/></svg><span class="t" style="left:2097.7px;top:1227.5px;font-size:26px;color:#5e5e5e;letter-spacing:-0.209px;">Yes</span>
<div style="position:absolute;left:2082px;top:1267px;width:218px;height:39.5px;background:#f4f4f4;border-radius:10px;box-shadow:0 0 0 1px rgba(0,0,0,.035),0 1px 2px rgba(0,0,0,.13);"></div><svg style="left:2272px;top:1275.05px" width="16" height="24" viewBox="0 0 16 24"><path d="M2.2 9.2L8 3.4l5.8 5.8M2.2 14.8L8 20.6l5.8-5.8" fill="none" stroke="#777" stroke-width="2.3" stroke-linecap="round" stroke-linejoin="round"/></svg><span class="t" style="left:2097.7px;top:1271.5px;font-size:26px;color:#5e5e5e;letter-spacing:-0.209px;">Yes</span>
<div style="position:absolute;left:2082px;top:1310.5px;width:218px;height:39.5px;background:#f4f4f4;border-radius:10px;box-shadow:0 0 0 1px rgba(0,0,0,.035),0 1px 2px rgba(0,0,0,.13);"></div><svg style="left:2272px;top:1318.55px" width="16" height="24" viewBox="0 0 16 24"><path d="M2.2 9.2L8 3.4l5.8 5.8M2.2 14.8L8 20.6l5.8-5.8" fill="none" stroke="#777" stroke-width="2.3" stroke-linecap="round" stroke-linejoin="round"/></svg><span class="t" style="left:2097.7px;top:1315.0px;font-size:26px;color:#5e5e5e;letter-spacing:-0.209px;">Yes</span>
<div style="position:absolute;left:2078px;top:1355px;width:228px;height:37px;background:#efefef;box-shadow:0 1px 1.5px rgba(0,0,0,.18),0 0 0 1px rgba(0,0,0,.025);"></div>
<div style="position:absolute;left:2082px;top:1400.5px;width:218px;height:1px;background:#dadada;"></div>
<div style="position:absolute;left:1791px;top:1352px;width:555px;height:49px;background:linear-gradient(180deg,rgba(240,240,240,0),rgba(240,240,240,.55));"></div>
<div style="position:absolute;left:1790px;top:1401px;width:606px;height:23px;background:#ececec;border-radius:0 0 12px 12px;"></div>
<div class="abs" style="left:77px;top:1425px;width:2242px;height:119.500px;border-radius:29px;background:#0a1220;"></div>
<div class="abs" style="left:78px;top:1426px;width:2240px;height:117.500px;border-radius:28px;background:#cecece;box-shadow:inset 0 0 0 1.800px #f4f4f4;"></div>
<svg style="left:95.8px;top:1444.0px;filter:drop-shadow(0 1px 1.5px rgba(0,0,0,.28));" width="71.6" height="71.6" viewBox="0 0 72 72"><defs><clipPath id="dk1"><rect x="0" y="0" width="72" height="72" rx="16.5"/></clipPath><linearGradient id="fa" x1="0" y1="0" x2="0" y2="1"><stop offset="0" stop-color="#1fb8fa"/><stop offset="1" stop-color="#1e68ee"/></linearGradient><linearGradient id="fb" x1="0" y1="0" x2="0" y2="1"><stop offset="0" stop-color="#f4f6fa"/><stop offset="1" stop-color="#dde2ee"/></linearGradient></defs><g clip-path="url(#dk1)"><rect width="72" height="72" fill="url(#fa)"/><path d="M38.300 0C33 12 31 28 31.100 39.100H40.700C40.700 52 43 64 45.500 72H72V0z" fill="url(#fb)"/><path d="M38.300 0C33 12 31 28 31.100 39.100H40.700C40.700 52 43 64 45.500 72" fill="none" stroke="#e9f1fb" stroke-width=".8" opacity=".6"/><rect x="17.800" y="20.400" width="3" height="8.600" rx="1.500" fill="#15324f"/><rect x="51.200" y="20.400" width="3" height="8.600" rx="1.500" fill="#1c2838"/><path d="M14.400 47.900C21 59.500 51 59.500 57.500 47.900" fill="none" stroke="#14253a" stroke-width="2.300" stroke-linecap="round"/></g></svg>
<svg style="left:190.6px;top:1444.0px;filter:drop-shadow(0 1px 1.5px rgba(0,0,0,.28));" width="71.6" height="71.6" viewBox="0 0 72 72"><defs><clipPath id="dk2"><rect x="0" y="0" width="72" height="72" rx="16.5"/></clipPath><linearGradient id="lpbg" x1="0" y1="0" x2="0" y2="1"><stop offset="0" stop-color="#f3f3f5"/><stop offset="1" stop-color="#e4e4e8"/></linearGradient><linearGradient id="lp0" x1="0" y1="0" x2="0" y2="1"><stop offset="0" stop-color="#5be45a"/><stop offset="1" stop-color="#25c130"/></linearGradient><linearGradient id="lp1" x1="0" y1="0" x2="0" y2="1"><stop offset="0" stop-color="#ffcc12"/><stop offset="1" stop-color="#f7a90a"/></linearGradient><linearGradient id="lp2" x1="0" y1="0" x2="0" y2="1"><stop offset="0" stop-color="#fb9a18"/><stop offset="1" stop-color="#f07a0c"/></linearGradient><linearGradient id="lp3" x1="0" y1="0" x2="0" y2="1"><stop offset="0" stop-color="#ea1c22"/><stop offset="1" stop-color="#b8060f"/></linearGradient><linearGradient id="lp4" x1="0" y1="0" x2="0" y2="1"><stop offset="0" stop-color="#c9ccd0"/><stop offset="1" stop-color="#6f7479"/></linearGradient><linearGradient id="lp5" x1="0" y1="0" x2="0" y2="1"><stop offset="0" stop-color="#f8476b"/><stop offset="1" stop-color="#e3204c"/></linearGradient><linearGradient id="lp6" x1="0" y1="0" x2="0" y2="1"><stop offset="0" stop-color="#a53fe0"/><stop offset="1" stop-color="#7a22b8"/></linearGradient><linearGradient id="lp7" x1="0" y1="0" x2="0" y2="1"><stop offset="0" stop-color="#28a6f8"/><stop offset="1" stop-color="#1668e0"/></linearGradient><linearGradient id="lp8" x1="0" y1="0" x2="0" y2="1"><stop offset="0" stop-color="#3ddcb0"/><stop offset="1" stop-color="#22b98e"/></linearGradient></defs><g clip-path="url(#dk2)"><rect width="72" height="72" fill="url(#lpbg)"/><rect x="11.200000000000001" y="13.200000000000001" width="12.800" height="12.800" rx="3.200" fill="url(#lp0)"/><rect x="28.200000000000003" y="13.200000000000001" width="12.800" height="12.800" rx="3.200" fill="url(#lp1)"/><rect x="45.5" y="13.200000000000001" width="12.800" height="12.800" rx="3.200" fill="url(#lp2)"/><rect x="11.200000000000001" y="30.300000000000004" width="12.800" height="12.800" rx="3.200" fill="url(#lp3)"/><rect x="28.200000000000003" y="30.300000000000004" width="12.800" height="12.800" rx="3.200" fill="url(#lp4)"/><rect x="45.5" y="30.300000000000004" width="12.800" height="12.800" rx="3.200" fill="url(#lp5)"/><rect x="11.200000000000001" y="47.4" width="12.800" height="12.800" rx="3.200" fill="url(#lp6)"/><rect x="28.200000000000003" y="47.4" width="12.800" height="12.800" rx="3.200" fill="url(#lp7)"/><rect x="45.5" y="47.4" width="12.800" height="12.800" rx="3.200" fill="url(#lp8)"/></g></svg>
<svg style="left:286.3px;top:1444.0px;filter:drop-shadow(0 1px 1.5px rgba(0,0,0,.28));" width="71.6" height="71.6" viewBox="0 0 72 72"><defs><clipPath id="dk3"><rect x="0" y="0" width="72" height="72" rx="16.5"/></clipPath><linearGradient id="sfbg" x1="0" y1="0" x2="0" y2="1"><stop offset="0" stop-color="#fbfbfb"/><stop offset="1" stop-color="#e3e3e5"/></linearGradient><linearGradient id="sfb" x1="0" y1="0" x2="0" y2="1"><stop offset="0" stop-color="#26b0f7"/><stop offset="1" stop-color="#1a62dc"/></linearGradient></defs><g clip-path="url(#dk3)"><rect width="72" height="72" fill="url(#sfbg)"/><circle cx="34.900" cy="35.900" r="31" fill="url(#sfb)"/><path d="M34.90 11.10L34.90 6.70M37.65 9.74L37.95 6.86M40.06 11.64L40.97 7.34M43.03 10.89L43.92 8.13M44.99 13.24L46.78 9.22M48.05 13.12L49.50 10.61M49.48 15.84L52.06 12.28M52.50 16.36L54.44 14.20M53.33 19.31L56.60 16.36M56.18 20.44L58.52 18.74M56.38 23.50L60.19 21.30M58.93 25.20L61.58 24.02M58.49 28.24L62.67 26.88M60.63 30.43L63.46 29.83M59.56 33.31L63.94 32.85M61.20 35.90L64.10 35.90M59.56 38.49L63.94 38.95M60.63 41.37L63.46 41.97M58.49 43.56L62.67 44.92M58.93 46.60L61.58 47.78M56.38 48.30L60.19 50.50M56.18 51.36L58.52 53.06M53.33 52.49L56.60 55.44M52.50 55.44L54.44 57.60M49.48 55.96L52.06 59.52M48.05 58.68L49.50 61.19M44.99 58.56L46.78 62.58M43.03 60.91L43.92 63.67M40.06 60.16L40.97 64.46M37.65 62.06L37.95 64.94M34.90 60.70L34.90 65.10M32.15 62.06L31.85 64.94M29.74 60.16L28.83 64.46M26.77 60.91L25.88 63.67M24.81 58.56L23.02 62.58M21.75 58.68L20.30 61.19M20.32 55.96L17.74 59.52M17.30 55.44L15.36 57.60M16.47 52.49L13.20 55.44M13.62 51.36L11.28 53.06M13.42 48.30L9.61 50.50M10.87 46.60L8.22 47.78M11.31 43.56L7.13 44.92M9.17 41.37L6.34 41.97M10.24 38.49L5.86 38.95M8.60 35.90L5.70 35.90M10.24 33.31L5.86 32.85M9.17 30.43L6.34 29.83M11.31 28.24L7.13 26.88M10.87 25.20L8.22 24.02M13.42 23.50L9.61 21.30M13.62 20.44L11.28 18.74M16.47 19.31L13.20 16.36M17.30 16.36L15.36 14.20M20.32 15.84L17.74 12.28M21.75 13.12L20.30 10.61M24.81 13.24L23.02 9.22M26.77 10.89L25.88 8.13M29.74 11.64L28.83 7.34M32.15 9.74L31.85 6.86" stroke="#e8f3ff" stroke-width=".9" opacity=".9"/><path d="M56.700 17.600L32.400 33.300L37.500 38.500z" fill="#e9323a"/><path d="M56.700 17.600L32.400 33.300L35 35.900z" fill="#f2555a"/><path d="M13.600 53.500L32.400 33.300L37.500 38.500z" fill="#f4f4f4"/><path d="M13.600 53.500L35 35.900L37.500 38.500z" fill="#cfd3d8"/></g></svg>
<svg style="left:379.9px;top:1444.0px;filter:drop-shadow(0 1px 1.5px rgba(0,0,0,.28));" width="71.6" height="71.6" viewBox="0 0 72 72"><defs><clipPath id="dk4"><rect x="0" y="0" width="72" height="72" rx="16.5"/></clipPath><linearGradient id="msg" x1="0" y1="0" x2="0" y2="1"><stop offset="0" stop-color="#62f26c"/><stop offset="1" stop-color="#20c236"/></linearGradient><linearGradient id="msb" x1="0" y1="0" x2="0" y2="1"><stop offset="0" stop-color="#ffffff"/><stop offset="1" stop-color="#d4ecd6"/></linearGradient></defs><g clip-path="url(#dk4)"><rect width="72" height="72" fill="url(#msg)"/><path d="M35.900 12.800C50.500 12.800 62.200 22.400 62.200 34.300C62.200 46.200 50.500 55.800 35.900 55.800C33 55.800 30.200 55.400 27.600 54.700C25.500 57 22.500 58.800 19.300 59.200C21 57 22 54.500 22.100 52.200C14.600 48.300 9.600 41.800 9.600 34.300C9.600 22.400 21.300 12.800 35.900 12.800z" fill="url(#msb)"/></g></svg>
<svg style="left:476.4px;top:1444.0px;filter:drop-shadow(0 1px 1.5px rgba(0,0,0,.28));" width="71.6" height="71.6" viewBox="0 0 72 72"><defs><clipPath id="dk5"><rect x="0" y="0" width="72" height="72" rx="16.5"/></clipPath><linearGradient id="mlg" x1="0" y1="0" x2="0" y2="1"><stop offset="0" stop-color="#1a6af4"/><stop offset="1" stop-color="#23c4fc"/></linearGradient><linearGradient id="mle" x1="0" y1="0" x2="0" y2="1"><stop offset="0" stop-color="#ffffff"/><stop offset="1" stop-color="#e4e6ea"/></linearGradient></defs><g clip-path="url(#dk5)"><rect width="72" height="72" fill="url(#mlg)"/><rect x="10.400" y="20.800" width="50.300" height="31.100" rx="3.500" fill="url(#mle)" stroke="#c9cdd3" stroke-width=".5"/><path d="M11.500 22L33 40.500Q35.500 42.500 38 40.500L59.600 22M11.500 50.800L28 35.500M59.600 50.800L43.200 35.500" fill="none" stroke="#b4b8c0" stroke-width="1.300"/></g></svg>
<svg style="left:570.1px;top:1444.0px;filter:drop-shadow(0 1px 1.5px rgba(0,0,0,.28));" width="71.6" height="71.6" viewBox="0 0 72 72"><defs><clipPath id="dk6"><rect x="0" y="0" width="72" height="72" rx="16.5"/></clipPath></defs><g clip-path="url(#dk6)"><rect width="72" height="72" fill="#ece9e2"/><circle cx="66" cy="6" r="58" fill="#f9d54a"/><circle cx="66" cy="6" r="51" fill="#8fdc62"/><circle cx="66" cy="6" r="41" fill="#f7f6f2"/><circle cx="66" cy="6" r="32" fill="#a4e37c"/><circle cx="66" cy="6" r="22" fill="#f7f6f2"/><circle cx="66" cy="6" r="15" fill="#86df66"/><path d="M0 12L10 15V72H0z" fill="#f4bccb"/><path d="M0 10L12 14V24L0 20z" fill="#f9d54a"/><rect x="9.500" y="0" width="17" height="72" fill="#f8f7f4"/><rect x="26.500" y="40" width="1.200" height="32" fill="#d9d6cf"/><rect x="13.300" y="0" width="9" height="38" fill="#1a86ee" stroke="#fdfdfd" stroke-width="2"/><circle cx="17.800" cy="43.100" r="11.300" fill="#fdfdfd"/><circle cx="17.800" cy="43.100" r="7.300" fill="#1a7fea"/><path d="M41 48.500C45 50 49 47.500 53 47.500C57 47.500 61 50 65 48.500C66.500 58 62 66 53 70C44 66 39.500 58 41 48.500z" fill="#2c6fd0" stroke="#f5f5f5" stroke-width="1.500"/><path d="M41.500 48.600C45 50 49 47.500 53 47.500C57 47.500 61 50 64.500 48.600L64.900 52.500H41.100z" fill="#e2374a"/><text x="53" y="62.300" font-family="Liberation Sans, sans-serif" font-weight="700" font-size="9.400" text-anchor="middle" fill="#fff">280</text></g></svg>
<svg style="left:666.4px;top:1444.0px;filter:drop-shadow(0 1px 1.5px rgba(0,0,0,.28));" width="71.6" height="71.6" viewBox="0 0 72 72"><defs><clipPath id="dk7"><rect x="0" y="0" width="72" height="72" rx="16.5"/></clipPath></defs><g clip-path="url(#dk7)"><rect width="72" height="72" fill="#fdfdfd"/><g style="mix-blend-mode:multiply"><ellipse cx="35.100" cy="22.600" rx="8.700" ry="13" fill="#f8931d" opacity=".88" transform="rotate(0 35.100 36.700)"/><ellipse cx="35.100" cy="22.600" rx="8.700" ry="13" fill="#f6d227" opacity=".88" transform="rotate(45 35.100 36.700)"/><ellipse cx="35.100" cy="22.600" rx="8.700" ry="13" fill="#a9d13f" opacity=".88" transform="rotate(90 35.100 36.700)"/><ellipse cx="35.100" cy="22.600" rx="8.700" ry="13" fill="#4fb58a" opacity=".88" transform="rotate(135 35.100 36.700)"/><ellipse cx="35.100" cy="22.600" rx="8.700" ry="13" fill="#4a90dc" opacity=".88" transform="rotate(180 35.100 36.700)"/><ellipse cx="35.100" cy="22.600" rx="8.700" ry="13" fill="#8a6fc8" opacity=".88" transform="rotate(225 35.100 36.700)"/><ellipse cx="35.100" cy="22.600" rx="8.700" ry="13" fill="#c965a8" opacity=".88" transform="rotate(270 35.100 36.700)"/><ellipse cx="35.100" cy="22.600" rx="8.700" ry="13" fill="#ee4b3e" opacity=".88" transform="rotate(315 35.100 36.700)"/></g></g></svg>
<svg style="left:760.4px;top:1444.0px;filter:drop-shadow(0 1px 1.5px rgba(0,0,0,.28));" width="71.6" height="71.6" viewBox="0 0 72 72"><defs><clipPath id="dk8"><rect x="0" y="0" width="72" height="72" rx="16.5"/></clipPath><linearGradient id="ftg" x1="0" y1="0" x2="0" y2="1"><stop offset="0" stop-color="#62f26c"/><stop offset="1" stop-color="#1fc034"/></linearGradient><linearGradient id="ftb" x1="0" y1="0" x2="0" y2="1"><stop offset="0" stop-color="#ffffff"/><stop offset="1" stop-color="#bfe6c4"/></linearGradient></defs><g clip-path="url(#dk8)"><rect width="72" height="72" fill="url(#ftg)"/><rect x="11.200" y="20.800" width="32.700" height="30.300" rx="7.500" fill="url(#ftb)"/><path d="M46.300 33.500L57 23.800Q59.900 21.500 59.900 25V47.500Q59.900 51 57 48.700L46.300 39z" fill="url(#ftb)"/></g></svg>
<svg style="left:856.2px;top:1444.0px;filter:drop-shadow(0 1px 1.5px rgba(0,0,0,.28));" width="71.6" height="71.6" viewBox="0 0 72 72"><defs><clipPath id="dk9"><rect x="0" y="0" width="72" height="72" rx="16.5"/></clipPath><linearGradient id="clg" x1="0" y1="0" x2="0" y2="1"><stop offset="0" stop-color="#ffffff"/><stop offset="1" stop-color="#ecebea"/></linearGradient></defs><g clip-path="url(#dk9)"><rect width="72" height="72" fill="url(#clg)"/><rect width="72" height="20.800" fill="#f24a50"/><text x="36" y="17" font-family="Liberation Sans, sans-serif" font-weight="700" font-size="12.400" text-anchor="middle" fill="#fff" letter-spacing=".3">JAN</text><text x="36" y="60.600" font-family="Liberation Sans, sans-serif" font-size="43.500" text-anchor="middle" fill="#1c1c1e" letter-spacing="-1">22</text></g></svg>
<svg style="left:951.6px;top:1444.0px;filter:drop-shadow(0 1px 1.5px rgba(0,0,0,.28));" width="71.6" height="71.6" viewBox="0 0 72 72"><defs><clipPath id="dk10"><rect x="0" y="0" width="72" height="72" rx="16.5"/></clipPath><linearGradient id="ctg" x1="0" y1="0" x2="0" y2="1"><stop offset="0" stop-color="#bb9152"/><stop offset="1" stop-color="#ad7f44"/></linearGradient></defs><g clip-path="url(#dk10)"><rect width="72" height="72" fill="url(#ctg)"/><circle cx="35.900" cy="35.100" r="20.500" fill="none" stroke="#a07a43" stroke-width="1.600"/><defs><clipPath id="ctc"><circle cx="35.900" cy="35.100" r="19.700"/></clipPath></defs><g clip-path="url(#ctc)" fill="#a27b44"><ellipse cx="35.900" cy="29" rx="7.400" ry="9"/><ellipse cx="35.900" cy="55" rx="17" ry="11.500"/></g></g></svg>
<div class="abs" style="left:1021.5px;top:1470px;width:4px;height:13px;background:#7fc6ee;border-radius:0 2px 2px 0"></div><div class="abs" style="left:1021.5px;top:1484px;width:4px;height:11px;background:#f39a2c;border-radius:0 2px 2px 0"></div><div class="abs" style="left:1021.5px;top:1496px;width:4px;height:12px;background:#6dd268;border-radius:0 2px 2px 0"></div>
<svg style="left:1046.5px;top:1444.0px;filter:drop-shadow(0 1px 1.5px rgba(0,0,0,.28));" width="71.6" height="71.6" viewBox="0 0 72 72"><defs><clipPath id="dk11"><rect x="0" y="0" width="72" height="72" rx="16.5"/></clipPath><linearGradient id="rmg" x1="0" y1="0" x2="0" y2="1"><stop offset="0" stop-color="#ffffff"/><stop offset="1" stop-color="#f2f2f2"/></linearGradient></defs><g clip-path="url(#dk11)"><rect width="72" height="72" fill="url(#rmg)"/><circle cx="13.600" cy="18.4" r="5.600" fill="#fff" stroke="#1f7cf0" stroke-width="1.400"/><circle cx="13.600" cy="18.4" r="3.500" fill="#1f7cf0"/><path d="M26.300 18.4H62.300" stroke="#c3c3c6" stroke-width="1"/><circle cx="13.600" cy="36.2" r="5.600" fill="#fff" stroke="#e8324a" stroke-width="1.400"/><circle cx="13.600" cy="36.2" r="3.500" fill="#e8324a"/><path d="M26.300 36.2H62.300" stroke="#c3c3c6" stroke-width="1"/><circle cx="13.600" cy="53.5" r="5.600" fill="#fff" stroke="#f5a320" stroke-width="1.400"/><circle cx="13.600" cy="53.5" r="3.500" fill="#f5a320"/><path d="M26.300 53.5H62.300" stroke="#c3c3c6" stroke-width="1"/></g></svg>
<svg style="left:1142.3px;top:1444.0px;filter:drop-shadow(0 1px 1.5px rgba(0,0,0,.28));" width="71.6" height="71.6" viewBox="0 0 72 72"><defs><clipPath id="dk12"><rect x="0" y="0" width="72" height="72" rx="16.5"/></clipPath><linearGradient id="ntg" x1="0" y1="0" x2="0" y2="1"><stop offset="0" stop-color="#fbfaf7"/><stop offset="1" stop-color="#ebe9e4"/></linearGradient><linearGradient id="nty" x1="0" y1="0" x2="0" y2="1"><stop offset="0" stop-color="#ffe04a"/><stop offset="1" stop-color="#f7c40c"/></linearGradient></defs><g clip-path="url(#dk12)"><rect width="72" height="72" fill="url(#ntg)"/><rect width="72" height="19.200" fill="url(#nty)"/><path d="M0 19.700H72" stroke="#d8d4c8" stroke-width="1" stroke-dasharray=".6 .8"/><path d="M0 28.300H72M0 37.200H72M0 45.800H72M0 54.800H72" stroke="#dedcd6" stroke-width=".9"/></g></svg>
<svg style="left:1236.7px;top:1444.0px;filter:drop-shadow(0 1px 1.5px rgba(0,0,0,.28));" width="71.6" height="71.6" viewBox="0 0 72 72"><defs><clipPath id="dk13"><rect x="0" y="0" width="72" height="72" rx="16.5"/></clipPath><linearGradient id="tvg" x1="0" y1="0" x2="0" y2="1"><stop offset="0" stop-color="#26302f"/><stop offset="1" stop-color="#0f1716"/></linearGradient></defs><g clip-path="url(#dk13)"><rect width="72" height="72" fill="url(#tvg)"/><svg x="9.800" y="22.300" width="21.500" height="25.600" viewBox="459 464 347 414"><path d="M788 611c-1 3-38 16-38 70 0 62 55 84 56 85-1 2-9 30-29 60-18 26-37 52-66 52s-36-17-70-17c-33 0-44 17-71 17-26 0-45-24-66-54-25-35-45-90-45-142 0-84 55-128 108-128 28 0 52 19 70 19 17 0 44-20 76-20 12 0 56 1 85 42zM687 533c13-16 23-38 23-60 0-3 0-6-1-9-22 1-48 15-64 33-12 14-24 36-24 59 0 3 1 7 1 8 1 0 4 1 6 1 20 0 45-13 59-32z" fill="#fff"/></svg><text x="33.300" y="47.300" font-family="Liberation Sans, sans-serif" font-weight="700" font-size="31" fill="#fff" letter-spacing="-.2">tv</text></g></svg>
<svg style="left:1331.9px;top:1444.0px;filter:drop-shadow(0 1px 1.5px rgba(0,0,0,.28));" width="71.6" height="71.6" viewBox="0 0 72 72"><defs><clipPath id="dk14"><rect x="0" y="0" width="72" height="72" rx="16.5"/></clipPath><linearGradient id="mug" x1="0" y1="0" x2="0" y2="1"><stop offset="0" stop-color="#fb5d76"/><stop offset="1" stop-color="#fa2038"/></linearGradient></defs><g clip-path="url(#dk14)"><rect width="72" height="72" fill="url(#mug)"/><path d="M23.500 20.300L52.400 12.500V48.700H48.200V24.500L27.700 30V52.700H23.500z" fill="#fff"/><ellipse cx="20.400" cy="53.100" rx="7.400" ry="5.900" fill="#fff" transform="rotate(-18 20.400 53.100)"/><ellipse cx="45.100" cy="49.100" rx="7.400" ry="5.900" fill="#fff" transform="rotate(-18 45.100 49.100)"/></g></svg>
<svg style="left:1426.0px;top:1444.0px;filter:drop-shadow(0 1px 1.5px rgba(0,0,0,.28));" width="71.6" height="71.6" viewBox="0 0 72 72"><defs><clipPath id="dk15"><rect x="0" y="0" width="72" height="72" rx="16.5"/></clipPath><linearGradient id="pdg" x1="0" y1="0" x2="0" y2="1"><stop offset="0" stop-color="#cb72f8"/><stop offset="1" stop-color="#7418c4"/></linearGradient></defs><g clip-path="url(#dk15)"><rect width="72" height="72" fill="url(#pdg)"/><path d="M22.300 53.900A24.900 24.900 0 1 1 48.300 53.900" fill="none" stroke="#fff" stroke-width="3.200" stroke-linecap="round"/><path d="M25.600 45A15.600 15.600 0 1 1 45 45" fill="none" stroke="#fff" stroke-width="3.200" stroke-linecap="round"/><circle cx="35.300" cy="32.700" r="6.300" fill="#fff"/><path d="M30 45.500C30 42.500 32 41.300 35.300 41.300C38.600 41.300 40.600 42.500 40.600 45.500L38.800 60C38.500 62.500 37.300 63.400 35.300 63.400C33.300 63.400 32.100 62.500 31.800 60z" fill="#fff"/></g></svg>
<svg style="left:1522.2px;top:1444.0px;filter:drop-shadow(0 1px 1.5px rgba(0,0,0,.28));" width="71.6" height="71.6" viewBox="0 0 72 72"><defs><clipPath id="dk16"><rect x="0" y="0" width="72" height="72" rx="16.5"/></clipPath></defs><g clip-path="url(#dk16)"><rect width="72" height="72" fill="#fefefe"/><defs><clipPath id="nwc"><rect x="13.900" y="16" width="41.500" height="39.900" rx="2.500"/></clipPath></defs><g clip-path="url(#nwc)" fill="#f5375c"><path d="M13.900 16H26L55.400 45V55.900H43.400L13.900 27z"/><path d="M36 16H55.400V35.500z"/><path d="M13.900 36.800V55.900H33z"/></g></g></svg>
<svg style="left:1616.6px;top:1444.0px;filter:drop-shadow(0 1px 1.5px rgba(0,0,0,.28));" width="71.6" height="71.6" viewBox="0 0 72 72"><defs><clipPath id="dk17"><rect x="0" y="0" width="72" height="72" rx="16.5"/></clipPath><linearGradient id="asg" x1="0" y1="0" x2="0" y2="1"><stop offset="0" stop-color="#1fb4f9"/><stop offset="1" stop-color="#1a68ee"/></linearGradient></defs><g clip-path="url(#dk17)"><rect width="72" height="72" fill="url(#asg)"/><path d="M39.800 16.300L30.500 32.300M26 40L24.300 43M31.800 16.300L49 46M52.300 51.700L54.300 55.200M20.300 49.700L17.500 54.500" fill="none" stroke="#f2f8ff" stroke-width="6" stroke-linecap="round"/><path d="M11.500 44.600H37.500M46.500 44.600H59" fill="none" stroke="#f2f8ff" stroke-width="6" stroke-linecap="round"/></g></svg>
<svg style="left:1714.5px;top:1445.8px;filter:drop-shadow(0 1px 1.5px rgba(0,0,0,.28));" width="67.5" height="67.5" viewBox="0 0 72 72"><defs><clipPath id="dk18"><rect x="0" y="0" width="72" height="72" rx="15"/></clipPath></defs><g clip-path="url(#dk18)"><rect width="72" height="72" fill="#c9c9c9"/><rect x="1.300" y="1.300" width="69.400" height="69.400" rx="14" fill="#060606"/><rect x="6.200" y="5.600" width="59.600" height="58.800" rx="9.500" fill="#2b2a2b"/><path d="M11.700 12.700L20.300 17.600L11.700 22.500" fill="none" stroke="#fff" stroke-width="2.200"/><rect x="23.300" y="25.300" width="11" height="2.200" fill="#fff"/></g></svg>
<svg style="left:1806.2px;top:1444.0px;filter:drop-shadow(0 1px 1.5px rgba(0,0,0,.28));" width="71.6" height="71.6" viewBox="0 0 72 72"><defs><clipPath id="dk19"><rect x="0" y="0" width="72" height="72" rx="16.5"/></clipPath><linearGradient id="spg" x1="0" y1="0" x2="0" y2="1"><stop offset="0" stop-color="#e3e9ec"/><stop offset="1" stop-color="#888c90"/></linearGradient><linearGradient id="spi" x1="0" y1="0" x2="0" y2="1"><stop offset="0" stop-color="#5e6164"/><stop offset="1" stop-color="#808488"/></linearGradient></defs><g clip-path="url(#dk19)"><rect width="72" height="72" fill="url(#spg)"/><rect x="33.300" y="5.600" width="2" height="4" fill="#3e4042" transform="rotate(0.0 34.300 35.900)"/><rect x="33.300" y="5.600" width="2" height="4" fill="#3e4042" transform="rotate(7.5 34.300 35.900)"/><rect x="33.300" y="5.600" width="2" height="4" fill="#3e4042" transform="rotate(15.0 34.300 35.900)"/><rect x="33.300" y="5.600" width="2" height="4" fill="#3e4042" transform="rotate(22.5 34.300 35.900)"/><rect x="33.300" y="5.600" width="2" height="4" fill="#3e4042" transform="rotate(30.0 34.300 35.900)"/><rect x="33.300" y="5.600" width="2" height="4" fill="#3e4042" transform="rotate(37.5 34.300 35.900)"/><rect x="33.300" y="5.600" width="2" height="4" fill="#3e4042" transform="rotate(45.0 34.300 35.900)"/><rect x="33.300" y="5.600" width="2" height="4" fill="#3e4042" transform="rotate(52.5 34.300 35.900)"/><rect x="33.300" y="5.600" width="2" height="4" fill="#3e4042" transform="rotate(60.0 34.300 35.900)"/><rect x="33.300" y="5.600" width="2" height="4" fill="#3e4042" transform="rotate(67.5 34.300 35.900)"/><rect x="33.300" y="5.600" width="2" height="4" fill="#3e4042" transform="rotate(75.0 34.300 35.900)"/><rect x="33.300" y="5.600" width="2" height="4" fill="#3e4042" transform="rotate(82.5 34.300 35.900)"/><rect x="33.300" y="5.600" width="2" height="4" fill="#3e4042" transform="rotate(90.0 34.300 35.900)"/><rect x="33.300" y="5.600" width="2" height="4" fill="#3e4042" transform="rotate(97.5 34.300 35.900)"/><rect x="33.300" y="5.600" width="2" height="4" fill="#3e4042" transform="rotate(105.0 34.300 35.900)"/><rect x="33.300" y="5.600" width="2" height="4" fill="#3e4042" transform="rotate(112.5 34.300 35.900)"/><rect x="33.300" y="5.600" width="2" height="4" fill="#3e4042" transform="rotate(120.0 34.300 35.900)"/><rect x="33.300" y="5.600" width="2" height="4" fill="#3e4042" transform="rotate(127.5 34.300 35.900)"/><rect x="33.300" y="5.600" width="2" height="4" fill="#3e4042" transform="rotate(135.0 34.300 35.900)"/><rect x="33.300" y="5.600" width="2" height="4" fill="#3e4042" transform="rotate(142.5 34.300 35.900)"/><rect x="33.300" y="5.600" width="2" height="4" fill="#3e4042" transform="rotate(150.0 34.300 35.900)"/><rect x="33.300" y="5.600" width="2" height="4" fill="#3e4042" transform="rotate(157.5 34.300 35.900)"/><rect x="33.300" y="5.600" width="2" height="4" fill="#3e4042" transform="rotate(165.0 34.300 35.900)"/><rect x="33.300" y="5.600" width="2" height="4" fill="#3e4042" transform="rotate(172.5 34.300 35.900)"/><rect x="33.300" y="5.600" width="2" height="4" fill="#3e4042" transform="rotate(180.0 34.300 35.900)"/><rect x="33.300" y="5.600" width="2" height="4" fill="#3e4042" transform="rotate(187.5 34.300 35.900)"/><rect x="33.300" y="5.600" width="2" height="4" fill="#3e4042" transform="rotate(195.0 34.300 35.900)"/><rect x="33.300" y="5.600" width="2" height="4" fill="#3e4042" transform="rotate(202.5 34.300 35.900)"/><rect x="33.300" y="5.600" width="2" height="4" fill="#3e4042" transform="rotate(210.0 34.300 35.900)"/><rect x="33.300" y="5.600" width="2" height="4" fill="#3e4042" transform="rotate(217.5 34.300 35.900)"/><rect x="33.300" y="5.600" width="2" height="4" fill="#3e4042" transform="rotate(225.0 34.300 35.900)"/><rect x="33.300" y="5.600" width="2" height="4" fill="#3e4042" transform="rotate(232.5 34.300 35.900)"/><rect x="33.300" y="5.600" width="2" height="4" fill="#3e4042" transform="rotate(240.0 34.300 35.900)"/><rect x="33.300" y="5.600" width="2" height="4" fill="#3e4042" transform="rotate(247.5 34.300 35.900)"/><rect x="33.300" y="5.600" width="2" height="4" fill="#3e4042" transform="rotate(255.0 34.300 35.900)"/><rect x="33.300" y="5.600" width="2" height="4" fill="#3e4042" transform="rotate(262.5 34.300 35.900)"/><rect x="33.300" y="5.600" width="2" height="4" fill="#3e4042" transform="rotate(270.0 34.300 35.900)"/><rect x="33.300" y="5.600" width="2" height="4" fill="#3e4042" transform="rotate(277.5 34.300 35.900)"/><rect x="33.300" y="5.600" width="2" height="4" fill="#3e4042" transform="rotate(285.0 34.300 35.900)"/><rect x="33.300" y="5.600" width="2" height="4" fill="#3e4042" transform="rotate(292.5 34.300 35.900)"/><rect x="33.300" y="5.600" width="2" height="4" fill="#3e4042" transform="rotate(300.0 34.300 35.900)"/><rect x="33.300" y="5.600" width="2" height="4" fill="#3e4042" transform="rotate(307.5 34.300 35.900)"/><rect x="33.300" y="5.600" width="2" height="4" fill="#3e4042" transform="rotate(315.0 34.300 35.900)"/><rect x="33.300" y="5.600" width="2" height="4" fill="#3e4042" transform="rotate(322.5 34.300 35.900)"/><rect x="33.300" y="5.600" width="2" height="4" fill="#3e4042" transform="rotate(330.0 34.300 35.900)"/><rect x="33.300" y="5.600" width="2" height="4" fill="#3e4042" transform="rotate(337.5 34.300 35.900)"/><rect x="33.300" y="5.600" width="2" height="4" fill="#3e4042" transform="rotate(345.0 34.300 35.900)"/><rect x="33.300" y="5.600" width="2" height="4" fill="#3e4042" transform="rotate(352.5 34.300 35.900)"/><circle cx="34.300" cy="35.900" r="27.500" fill="#4b4d50"/><circle cx="34.300" cy="35.900" r="23.200" fill="#b9bdc0"/><circle cx="34.300" cy="35.900" r="20.200" fill="url(#spi)"/><circle cx="34.300" cy="35.900" r="12" fill="none" stroke="#8a8e92" stroke-width="5" opacity=".55"/><rect x="32.900" y="15" width="2.800" height="21" fill="#c3c7ca" transform="rotate(30 34.300 35.900)"/><rect x="32.900" y="15" width="2.800" height="21" fill="#c3c7ca" transform="rotate(150 34.300 35.900)"/><rect x="32.900" y="15" width="2.800" height="21" fill="#c3c7ca" transform="rotate(270 34.300 35.900)"/><circle cx="34.300" cy="35.900" r="3" fill="#d5d8da"/></g></svg>
<svg style="left:1897.300px;top:1438.900px;filter:drop-shadow(0 1px 1.5px rgba(0,0,0,.3))" width="81.200" height="81.200" viewBox="-40.600 -40.600 81.200 81.200"><defs><clipPath id="amc"><circle cx="0" cy="0" r="37.500"/></clipPath></defs><circle cx="0" cy="0" r="40" fill="#fdfdfd"/><circle cx="0" cy="0" r="37" fill="#41a0e8"/><g clip-path="url(#amc)"><rect x="-40" y="14" width="80" height="30" fill="#4a8fd8"/></g><path d="M-29 12L-16 -15.500L-6.500 0.500M-12 12L7.200 -28.700L30 12M-36 13.200H36" fill="none" stroke="#fdfdfd" stroke-width="3.400" stroke-linejoin="miter"/></svg>
<svg style="left:1987.900px;top:1436px;" width="88.300" height="88.300" viewBox="0 0 88.300 88.300"><defs><clipPath id="ccc"><path d="M30 0H85.300Q88.300 0 88.300 3V58Q88.300 88.300 58 88.300H30Q0 88.300 0 58V30Q0 0 30 0z"/></clipPath><linearGradient id="ccg" x1="0" y1="0" x2="1" y2="1"><stop offset="0" stop-color="#7c000c"/><stop offset=".35" stop-color="#b40016"/><stop offset=".6" stop-color="#8c0010"/><stop offset="1" stop-color="#a50014"/></linearGradient></defs><g clip-path="url(#ccc)"><rect width="88.300" height="88.300" fill="url(#ccg)"/><path d="M0 40L60 0H88.300V20L30 88.300H0z" fill="#c4001a" opacity=".35"/><path d="M50 0H88.300V50z" fill="#5e0008" opacity=".45"/><path d="M0 60L40 88.300H0z" fill="#d0001c" opacity=".3"/></g><path d="M37 4V84.100M4 50.600H84.100" stroke="#fff" stroke-width="4"/><rect x="22.900" y="36.100" width="28.300" height="29.100" fill="#a60015" stroke="#fff" stroke-width="4"/><rect x="32.400" y="45.900" width="9.800" height="9.500" fill="#fff"/></svg>
<div class="abs" style="left:2101.700px;top:1440.700px;width:1.800px;height:87px;background:#8b8b8b"></div>
<svg style="left:2128.700px;top:1446.600px;filter:drop-shadow(0 1px 1px rgba(0,0,0,.2))" width="83.100" height="69.100" viewBox="0 0 83.100 69.100"><defs><linearGradient id="dfg" x1="0" y1="0" x2="0" y2="1"><stop offset="0" stop-color="#72c9fc"/><stop offset="1" stop-color="#5ab6f4"/></linearGradient><linearGradient id="dft" x1="0" y1="0" x2="0" y2="1"><stop offset="0" stop-color="#3a9ede"/><stop offset="1" stop-color="#48abe9"/></linearGradient></defs><path d="M0 8Q0 0 8 0H22Q26 0 29 3L32 5.800H75Q83.100 5.800 83.100 13.800V30H0z" fill="url(#dft)"/><rect x="0" y="11.800" width="83.100" height="57.300" rx="7" fill="url(#dfg)"/><rect x="0" y="64" width="83.100" height="5.100" rx="2.500" fill="#4aa5e6" opacity=".6"/><circle cx="41.200" cy="36.800" r="14.700" fill="#3e9ee3"/><path d="M41.200 28.500V44.200M34.800 38.200L41.200 44.600L47.600 38.200" fill="none" stroke="#8ed1fb" stroke-width="2.600" stroke-linecap="round" stroke-linejoin="round"/></svg>
<svg style="left:2234.600px;top:1442px;filter:drop-shadow(0 1px 1.5px rgba(0,0,0,.18))" width="62.500" height="77.500" viewBox="0 0 62.500 77.500"><defs><linearGradient id="trg2" x1="0" y1="0" x2="1" y2="0"><stop offset="0" stop-color="#efeff0"/><stop offset=".45" stop-color="#e2e2e4"/><stop offset=".7" stop-color="#f0f0f1"/><stop offset="1" stop-color="#dededf"/></linearGradient></defs><path d="M0 6L10 69Q11 77.500 31.250 77.500Q51.500 77.500 52.500 69L62.500 6z" fill="url(#trg2)"/><ellipse cx="31.250" cy="6" rx="31.250" ry="6" fill="#f3f3f4"/><ellipse cx="31.250" cy="6.800" rx="28" ry="4.200" fill="#e0e0e2"/></svg>
<div class="abs" style="left:127.69999999999999px;top:1531.800px;width:8px;height:8px;border-radius:4px;background:#4a4a4a"></div>
<div class="abs" style="left:318px;top:1531.800px;width:8px;height:8px;border-radius:4px;background:#4a4a4a"></div>
<div class="abs" style="left:2028px;top:1531.800px;width:8px;height:8px;border-radius:4px;background:#4a4a4a"></div>
<div class="abs" style="left:0;top:47px;width:2396px;height:3px;background:linear-gradient(90deg,#d81b5e 0px,#c2185b 395px,#7c97b0 425px,#6b8aa8 1000px,#5f86a3 1740px,#1d4a6a 1800px,#173f60 2396px);"></div>
<div class="abs" style="left:0;top:0;width:2396px;height:47.800px;background:linear-gradient(180deg,#dedede 0,#dddddd 32px,#d9dcde 47px);"></div>
<div class="abs" style="left:0;top:34px;width:440px;height:13.800px;background:linear-gradient(180deg,rgba(236,170,195,0),rgba(236,170,195,.45));-webkit-mask-image:linear-gradient(90deg,#000 380px,transparent 440px)"></div>
<svg style="left:44px;top:5.800px" width="26.6" height="31.8" viewBox="459 464 347 414"><path d="M788 611c-1 3-38 16-38 70 0 62 55 84 56 85-1 2-9 30-29 60-18 26-37 52-66 52s-36-17-70-17c-33 0-44 17-71 17-26 0-45-24-66-54-25-35-45-90-45-142 0-84 55-128 108-128 28 0 52 19 70 19 17 0 44-20 76-20 12 0 56 1 85 42zM687 533c13-16 23-38 23-60 0-3 0-6-1-9-22 1-48 15-64 33-12 14-24 36-24 59 0 3 1 7 1 8 1 0 4 1 6 1 20 0 45-13 59-32z" fill="#1d1d1d"/></svg>
<span class="t" style="left:114px;top:11.0px;font-size:27px;font-weight:700;color:#1b1b1b;letter-spacing:0.077px;">CorelCAD 2021</span>
<span class="t" style="left:352px;top:11.0px;font-size:27px;color:#1b1b1b;letter-spacing:-0.169px;">File</span>
<span class="t" style="left:436px;top:11.0px;font-size:27px;color:#1b1b1b;letter-spacing:0.492px;">Edit</span>
<span class="t" style="left:523px;top:11.0px;font-size:27px;color:#1b1b1b;letter-spacing:0.655px;">View</span>
<span class="t" style="left:622px;top:11.0px;font-size:27px;color:#1b1b1b;letter-spacing:0.895px;">Insert</span>
<span class="t" style="left:733px;top:11.0px;font-size:27px;color:#1b1b1b;letter-spacing:0.298px;">Format</span>
<span class="t" style="left:859px;top:11.0px;font-size:27px;color:#1b1b1b;letter-spacing:0.181px;">Dimension</span>
<span class="t" style="left:1027px;top:11.0px;font-size:27px;color:#1b1b1b;letter-spacing:0.664px;">Draw</span>
<span class="t" style="left:1130.6px;top:11.0px;font-size:27px;color:#1b1b1b;letter-spacing:0.975px;">Modify</span>
<span class="t" style="left:1254px;top:11.0px;font-size:27px;color:#1b1b1b;letter-spacing:0.545px;">Constraints</span>
<span class="t" style="left:1435px;top:11.0px;font-size:27px;color:#1b1b1b;letter-spacing:0.867px;">Tools</span>
<span class="t" style="left:1540.7px;top:11.0px;font-size:27px;color:#1b1b1b;letter-spacing:0.352px;">Solids</span>
<span class="t" style="left:1655px;top:11.0px;font-size:27px;color:#1b1b1b;letter-spacing:0.554px;">Window</span>
<span class="t" style="left:1792.5px;top:11.0px;font-size:27px;color:#1b1b1b;letter-spacing:0.656px;">Help</span>
<svg style="left:2123.500px;top:6px" width="40" height="32" viewBox="0 0 40 32"><path d="M5.600 13.700A20.300 20.300 0 0 1 34.400 13.700" fill="none" stroke="#a9a9a9" stroke-width="4.200" stroke-linecap="butt"/><path d="M10.700 21.300A11.600 11.600 0 0 1 29.300 21.300" fill="none" stroke="#3b3b3b" stroke-width="4.200" stroke-linecap="butt"/><path d="M15.800 23.600A6 6 0 0 1 24.200 23.600L20 28.200z" fill="#ababab"/></svg>
<svg style="left:2197px;top:10px" width="28" height="28" viewBox="0 0 28 28"><circle cx="12.200" cy="12.100" r="8.500" fill="none" stroke="#1f1f1f" stroke-width="3.200"/><path d="M18.400 18.300L24.300 24.200" stroke="#1f1f1f" stroke-width="3.800" stroke-linecap="round"/></svg>
<svg style="left:2260px;top:11px" width="32" height="28" viewBox="0 0 32 28"><rect x="3.400" y="2.500" width="25.200" height="9" rx="4.500" fill="none" stroke="#2c2c2c" stroke-width="2.200"/><circle cx="8.500" cy="7.300" r="2.800" fill="#3a3a3a"/><rect x="2.300" y="15.700" width="27.400" height="10.600" rx="5.300" fill="#3a3a3a"/><circle cx="24.700" cy="21.600" r="3.200" fill="#e4e4e4"/></svg>
<svg style="left:2324px;top:6px" width="36" height="36" viewBox="0 0 36 36"><circle cx="17.900" cy="17.600" r="16" fill="none" stroke="#1f1f1f" stroke-width="2"/><path d="M5.800 17.400L18.500 17.900L10.400 23.200" fill="none" stroke="#1f1f1f" stroke-width="1.800" stroke-linecap="round" stroke-linejoin="round"/></svg>
</div>
</body></html>
